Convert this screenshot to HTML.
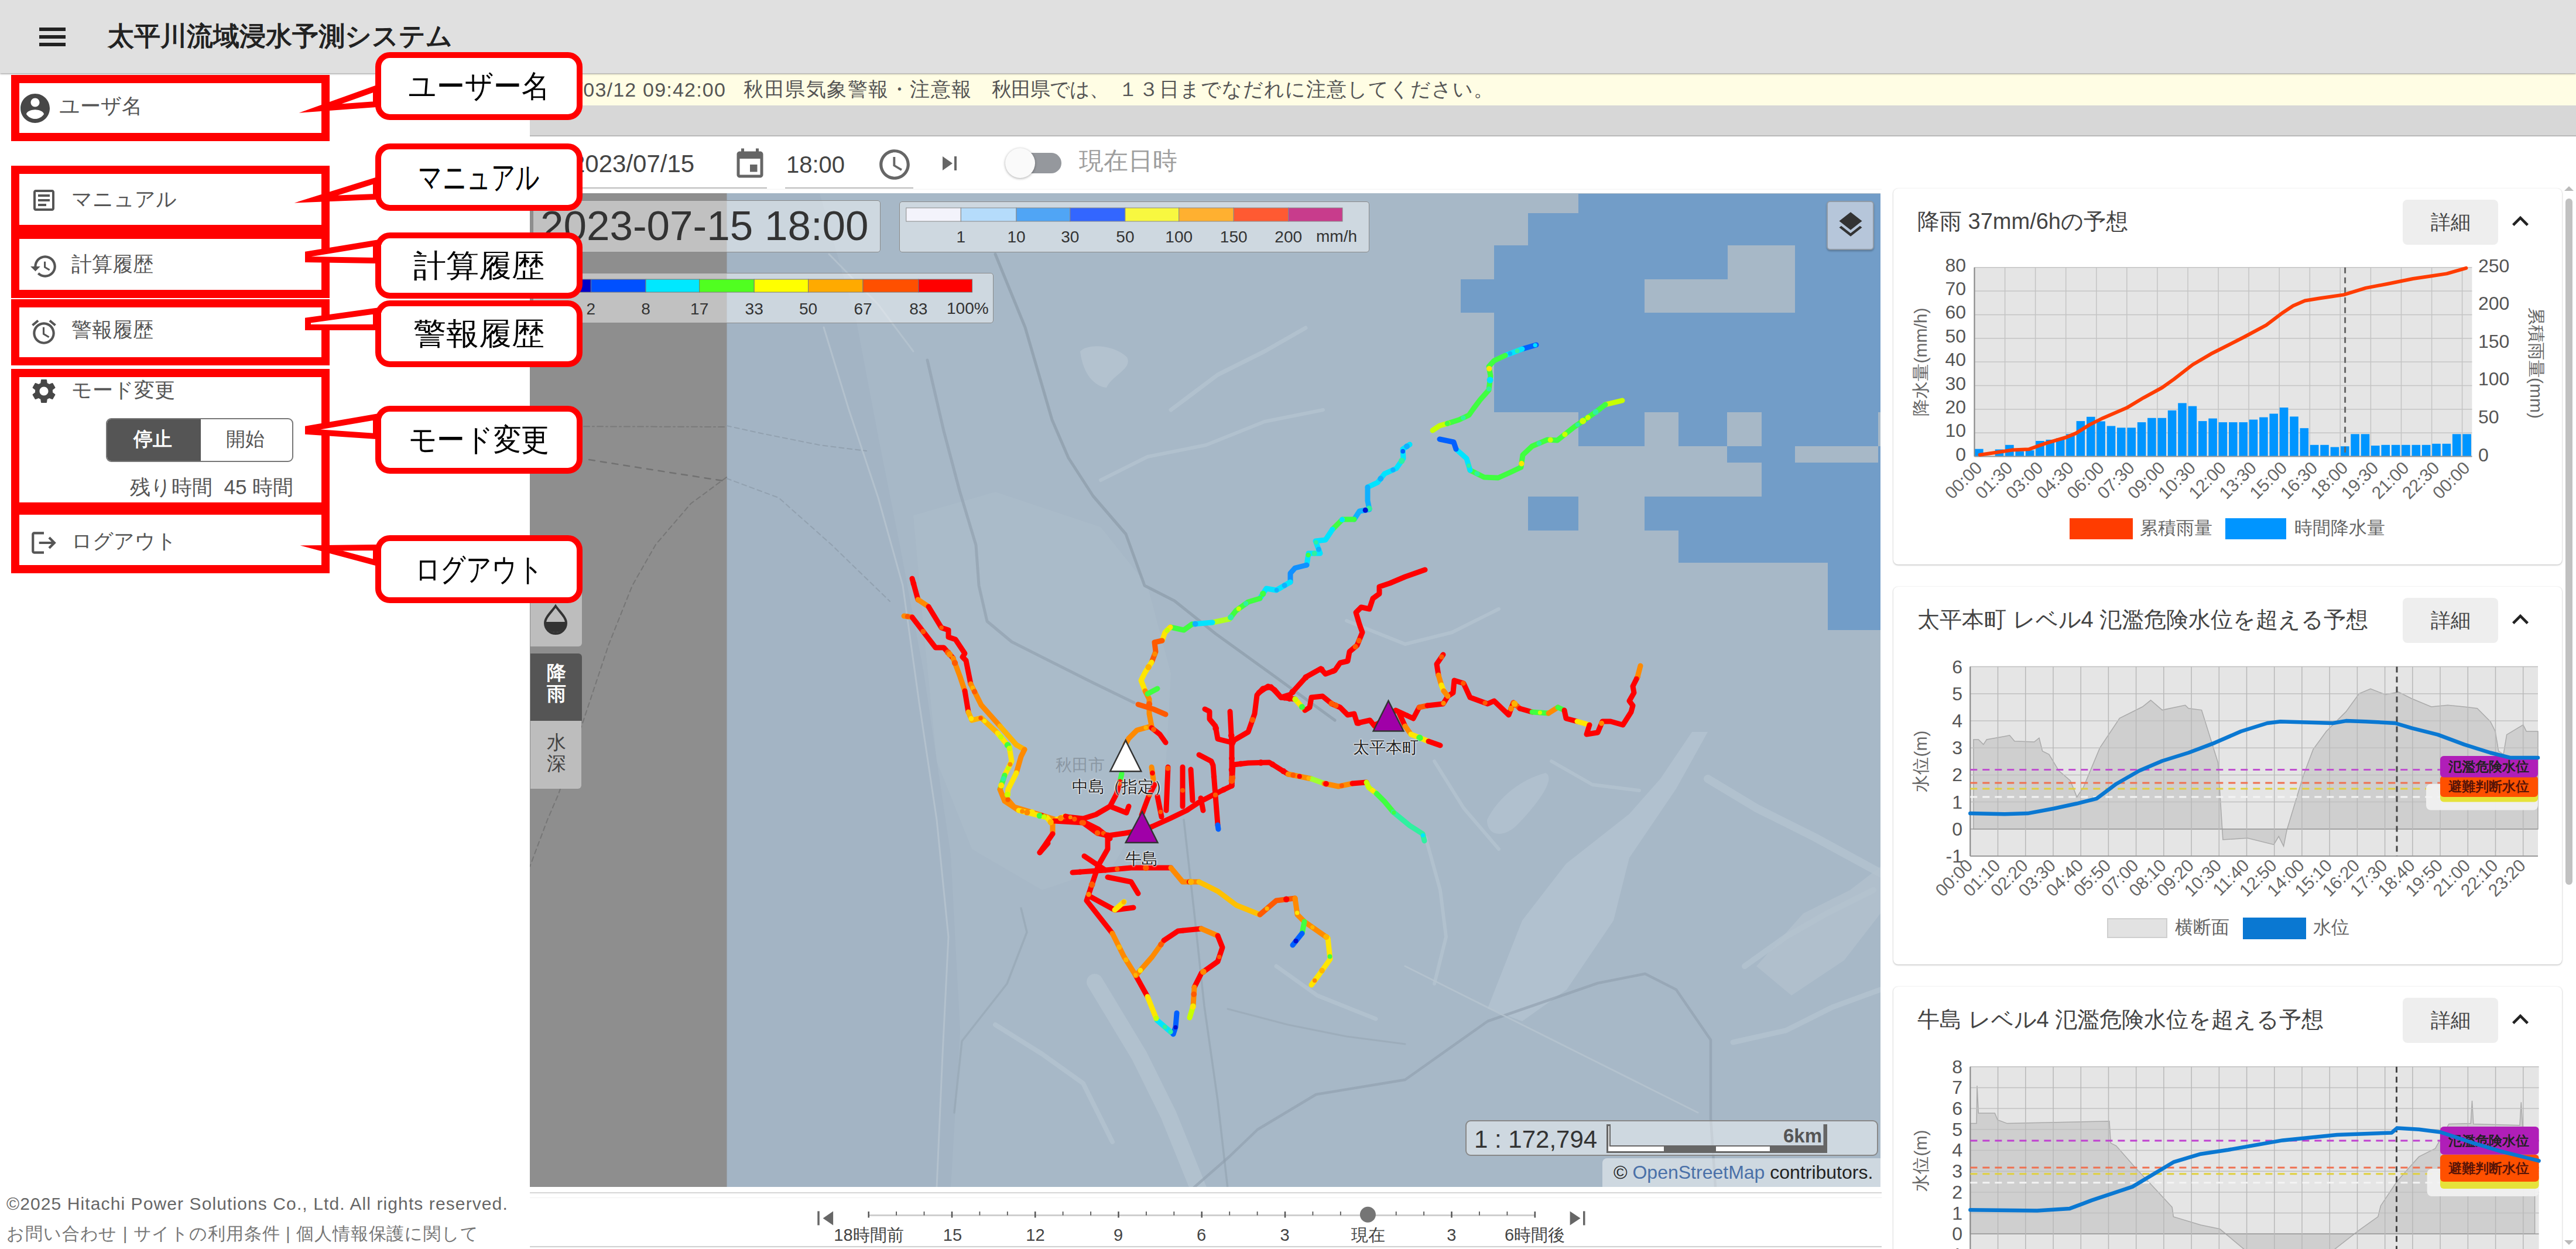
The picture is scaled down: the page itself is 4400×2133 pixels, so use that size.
<!DOCTYPE html>
<html><head><meta charset="utf-8">
<style>
html,body{margin:0;padding:0;}
body{width:4400px;height:2133px;position:relative;overflow:hidden;background:#fff;font-family:"Liberation Sans",sans-serif;color:#555;}
.a{position:absolute;}
svg.a{overflow:visible;}
</style></head><body>
<div class="a" style="left:0;top:0;width:4400px;height:125px;background:#e0e0e0;box-shadow:0 1px 3px rgba(0,0,0,.45);z-index:5"></div>
<div class="a" style="left:67px;top:47px;width:45px;height:6px;background:#222;z-index:6"></div>
<div class="a" style="left:67px;top:60px;width:45px;height:6px;background:#222;z-index:6"></div>
<div class="a" style="left:67px;top:73px;width:45px;height:6px;background:#222;z-index:6"></div>
<div class="a" style="left:184px;top:36px;font-size:45px;line-height:52px;color:#222;font-weight:bold;white-space:nowrap;z-index:6;">太平川流域浸水予測システム</div>
<div class="a" style="left:905px;top:126px;width:3495px;height:54px;background:#fffde4"></div>
<div class="a" style="left:905px;top:180px;width:3495px;height:51px;background:#d7d7d7;border-bottom:2px solid #b9b9b9"></div>
<div class="a" style="left:700px;top:133px;width:540px;text-align:right;font-size:34px;line-height:40px;letter-spacing:1.2px;color:#555;white-space:nowrap;z-index:1">2025/03/12 09:42:00</div>
<div class="a" style="left:1270px;top:133px;font-size:34px;line-height:39px;color:#555;font-weight:normal;white-space:nowrap;z-index:1;letter-spacing:1.5px">秋田県気象警報・注意報</div>
<div class="a" style="left:1694px;top:133px;font-size:34px;line-height:39px;color:#555;font-weight:normal;white-space:nowrap;z-index:1;letter-spacing:-1px">秋田県では、</div>
<div class="a" style="left:1910px;top:133px;font-size:34px;line-height:39px;color:#555;font-weight:normal;white-space:nowrap;z-index:1;letter-spacing:1px">１３日までなだれに注意してください。</div>
<div class="a" style="left:905px;top:233px;width:3495px;height:97px;background:#fff"></div>
<div class="a" style="left:976px;top:256px;font-size:42px;line-height:48px;color:#444;font-weight:normal;white-space:nowrap;z-index:1;">2023/07/15</div>
<div class="a" style="left:905px;top:320px;width:405px;height:2px;background:#bbb"></div>
<svg class="a" style="left:1251px;top:251px;z-index:1" width="60" height="60" viewBox="0 0 24 24"><path fill="#666" d="M17 12h-5v5h5v-5zM16 1v2H8V1H6v2H5c-1.11 0-1.99.9-1.99 2L3 19c0 1.1.89 2 2 2h14c1.1 0 2-.9 2-2V5c0-1.1-.9-2-2-2h-1V1h-2zm3 18H5V8h14v11z"/></svg>
<div class="a" style="left:1343px;top:258px;font-size:40px;line-height:46px;color:#444;font-weight:normal;white-space:nowrap;z-index:1;">18:00</div>
<div class="a" style="left:1341px;top:320px;width:219px;height:2px;background:#bbb"></div>
<svg class="a" style="left:1497px;top:250px;z-index:1" width="62" height="62" viewBox="0 0 24 24"><path fill="#666" d="M11.99 2C6.47 2 2 6.48 2 12s4.47 10 9.99 10C17.52 22 22 17.52 22 12S17.52 2 11.99 2zM12 20c-4.42 0-8-3.58-8-8s3.58-8 8-8 8 3.58 8 8-3.58 8-8 8zm.5-13H11v6l5.25 3.15.75-1.23-4.5-2.67z"/></svg>
<svg class="a" style="left:1598px;top:255px;z-index:1" width="48" height="48" viewBox="0 0 24 24"><path fill="#666" d="M6 18l8.5-6L6 6v12zM16 6v12h2V6h-2z"/></svg>
<div class="a" style="left:1725px;top:261px;width:88px;height:35px;border-radius:18px;background:#95989d"></div>
<div class="a" style="left:1717px;top:253px;width:51px;height:51px;border-radius:26px;background:#fafafa;box-shadow:0 1px 4px rgba(0,0,0,.35)"></div>
<div class="a" style="left:1843px;top:251px;font-size:42px;line-height:48px;color:#9e9e9e;font-weight:normal;white-space:nowrap;z-index:1;">現在日時</div>
<div class="a" style="left:0;top:125px;width:905px;height:2008px;background:#fff;z-index:1"></div>
<svg class="a" style="left:30px;top:155px;z-index:3" width="60" height="60" viewBox="0 0 24 24"><path fill="#474747" d="M12 2C6.48 2 2 6.48 2 12s4.48 10 10 10 10-4.48 10-10S17.52 2 12 2zm0 3c1.66 0 3 1.34 3 3s-1.34 3-3 3-3-1.34-3-3 1.34-3 3-3zm0 14.2c-2.5 0-4.71-1.28-6-3.22.03-1.99 4-3.08 6-3.08 1.99 0 5.97 1.09 6 3.08-1.29 1.94-3.5 3.22-6 3.22z"/></svg>
<div class="a" style="left:101px;top:161px;font-size:35px;line-height:40px;color:#555;font-weight:normal;white-space:nowrap;z-index:3;">ユーザ名</div>
<svg class="a" style="left:51px;top:318px;z-index:3" width="48" height="48" viewBox="0 0 24 24"><path fill="#555" d="M19 5v14H5V5h14m0-2H5c-1.1 0-2 .9-2 2v14c0 1.1.9 2 2 2h14c1.1 0 2-.9 2-2V5c0-1.1-.9-2-2-2zM14 17H7v-2h7v2zm3-4H7v-2h10v2zm0-4H7V7h10v2z"/></svg>
<div class="a" style="left:122px;top:320px;font-size:35px;line-height:40px;color:#555;font-weight:normal;white-space:nowrap;z-index:3;">マニュアル</div>
<svg class="a" style="left:50px;top:430px;z-index:3" width="50" height="50" viewBox="0 0 24 24"><path fill="#555" d="M13 3c-4.97 0-9 4.03-9 9H1l3.89 3.89.07.14L9 12H6c0-3.87 3.13-7 7-7s7 3.13 7 7-3.13 7-7 7c-1.93 0-3.68-.79-4.94-2.06l-1.42 1.42C8.27 19.99 10.51 21 13 21c4.97 0 9-4.03 9-9s-4.03-9-9-9zm-1 5v5l4.28 2.54.72-1.21-3.5-2.08V8H12z"/></svg>
<div class="a" style="left:122px;top:431px;font-size:35px;line-height:40px;color:#555;font-weight:normal;white-space:nowrap;z-index:3;">計算履歴</div>
<svg class="a" style="left:50px;top:542px;z-index:3" width="50" height="50" viewBox="0 0 24 24"><path fill="#555" d="M22 5.72l-4.6-3.86-1.29 1.53 4.6 3.86L22 5.72zM7.88 3.39L6.6 1.86 2 5.71l1.29 1.53 4.59-3.85zM12.5 8H11v6l4.75 2.85.75-1.23-4-2.37V8zM12 4c-4.97 0-9 4.03-9 9s4.02 9 9 9c4.97 0 9-4.03 9-9s-4.03-9-9-9zm0 16c-3.87 0-7-3.13-7-7s3.13-7 7-7 7 3.13 7 7-3.13 7-7 7z"/></svg>
<div class="a" style="left:122px;top:543px;font-size:35px;line-height:40px;color:#555;font-weight:normal;white-space:nowrap;z-index:3;">警報履歴</div>
<svg class="a" style="left:50px;top:643px;z-index:3" width="50" height="50" viewBox="0 0 24 24"><path fill="#474747" d="M19.14 12.94c.04-.3.06-.61.06-.94 0-.32-.02-.64-.07-.94l2.03-1.58c.18-.14.23-.41.12-.61l-1.92-3.32c-.12-.22-.37-.29-.59-.22l-2.39.96c-.5-.38-1.03-.7-1.62-.94l-.36-2.54c-.04-.24-.24-.41-.48-.41h-3.84c-.24 0-.43.17-.47.41l-.36 2.54c-.59.24-1.13.57-1.62.94l-2.39-.96c-.22-.08-.47 0-.59.22L2.74 8.87c-.12.21-.08.47.12.61l2.03 1.58c-.05.3-.09.63-.09.94s.02.64.07.94l-2.03 1.58c-.18.14-.23.41-.12.61l1.92 3.32c.12.22.37.29.59.22l2.39-.96c.5.38 1.03.7 1.62.94l.36 2.54c.05.24.24.41.48.41h3.84c.24 0 .44-.17.47-.41l.36-2.54c.59-.24 1.13-.56 1.62-.94l2.39.96c.22.08.47 0 .59-.22l1.92-3.32c.12-.22.07-.47-.12-.61l-2.01-1.58zM12 15.6c-1.98 0-3.6-1.62-3.6-3.6s1.62-3.6 3.6-3.6 3.6 1.62 3.6 3.6-1.62 3.6-3.6 3.6z"/></svg>
<div class="a" style="left:122px;top:646px;font-size:35px;line-height:40px;color:#555;font-weight:normal;white-space:nowrap;z-index:3;">モード変更</div>
<div class="a" style="left:181px;top:714px;width:320px;height:75px;border:2px solid #777;border-radius:9px;box-sizing:border-box;background:#fff;z-index:3;overflow:hidden"><div class="a" style="left:0;top:0;width:160px;height:75px;background:#555"></div></div>
<div class="a" style="left:228px;top:731px;font-size:33px;line-height:38px;color:#fff;font-weight:bold;white-space:nowrap;z-index:4;">停止</div>
<div class="a" style="left:386px;top:731px;font-size:33px;line-height:38px;color:#555;font-weight:normal;white-space:nowrap;z-index:4;">開始</div>
<div class="a" style="left:222px;top:812px;font-size:35px;line-height:40px;color:#555;font-weight:normal;white-space:nowrap;z-index:3;">残り時間 &nbsp;45 時間</div>
<svg class="a" style="left:50px;top:902px;z-index:3" width="50" height="50" viewBox="0 0 24 24"><path fill="#555" d="M17 7l-1.41 1.41L18.17 11H8v2h10.17l-2.58 2.58L17 17l5-5zM4 5h8V3H4c-1.1 0-2 .9-2 2v14c0 1.1.9 2 2 2h8v-2H4V5z"/></svg>
<div class="a" style="left:122px;top:904px;font-size:35px;line-height:40px;color:#555;font-weight:normal;white-space:nowrap;z-index:3;">ログアウト</div>
<div class="a" style="left:19px;top:128px;width:544px;height:113px;border:14px solid #f00;box-sizing:border-box;z-index:4"></div>
<div class="a" style="left:19px;top:283px;width:544px;height:115px;border:14px solid #f00;box-sizing:border-box;z-index:4"></div>
<div class="a" style="left:19px;top:394px;width:544px;height:115px;border:14px solid #f00;box-sizing:border-box;z-index:4"></div>
<div class="a" style="left:19px;top:511px;width:544px;height:113px;border:14px solid #f00;box-sizing:border-box;z-index:4"></div>
<div class="a" style="left:19px;top:630px;width:544px;height:242px;border:14px solid #f00;box-sizing:border-box;z-index:4"></div>
<div class="a" style="left:19px;top:865px;width:544px;height:114px;border:14px solid #f00;box-sizing:border-box;z-index:4"></div>
<svg class="a" style="left:0;top:0;z-index:8" width="1100" height="1100" viewBox="0 0 1100 1100"><rect x="646" y="94" width="344" height="106" rx="20" ry="20" fill="#fff" stroke="#f00" stroke-width="10"/><polygon points="642,151 547,185 642,178" fill="#fff" stroke="#f00" stroke-width="10" stroke-linejoin="miter" stroke-miterlimit="12"/><rect x="651" y="154" width="30" height="28" fill="#fff"/><rect x="646" y="250" width="344" height="105" rx="20" ry="20" fill="#fff" stroke="#f00" stroke-width="10"/><polygon points="642,308 540,340 642,336" fill="#fff" stroke="#f00" stroke-width="10" stroke-linejoin="miter" stroke-miterlimit="12"/><rect x="651" y="311" width="30" height="26" fill="#fff"/><rect x="646" y="402" width="344" height="103" rx="20" ry="20" fill="#fff" stroke="#f00" stroke-width="10"/><polygon points="642,415 526,434 526,443 642,445" fill="#fff" stroke="#f00" stroke-width="10" stroke-linejoin="miter" stroke-miterlimit="12"/><rect x="651" y="418" width="30" height="24" fill="#fff"/><rect x="646" y="518" width="344" height="104" rx="20" ry="20" fill="#fff" stroke="#f00" stroke-width="10"/><polygon points="642,531 526,547 526,559 642,559" fill="#fff" stroke="#f00" stroke-width="10" stroke-linejoin="miter" stroke-miterlimit="12"/><rect x="651" y="534" width="30" height="22" fill="#fff"/><rect x="646" y="698" width="344" height="106" rx="20" ry="20" fill="#fff" stroke="#f00" stroke-width="10"/><polygon points="642,712 526,732 526,737 642,745" fill="#fff" stroke="#f00" stroke-width="10" stroke-linejoin="miter" stroke-miterlimit="12"/><rect x="651" y="715" width="30" height="27" fill="#fff"/><rect x="646" y="919" width="344" height="106" rx="20" ry="20" fill="#fff" stroke="#f00" stroke-width="10"/><polygon points="642,935 549,936 642,961" fill="#fff" stroke="#f00" stroke-width="10" stroke-linejoin="miter" stroke-miterlimit="12"/><rect x="651" y="938" width="30" height="20" fill="#fff"/></svg>
<div class="a" style="left:646px;top:89px;width:344px;height:116px;line-height:116px;text-align:center;font-size:52px;transform:scaleX(0.92);color:#000;z-index:9;white-space:nowrap">ユーザー名</div>
<div class="a" style="left:646px;top:245px;width:344px;height:115px;line-height:115px;text-align:center;font-size:56px;transform:scaleX(0.727);color:#000;z-index:9;white-space:nowrap">マニュアル</div>
<div class="a" style="left:646px;top:397px;width:344px;height:113px;line-height:113px;text-align:center;font-size:53px;transform:scaleX(1.06);color:#000;z-index:9;white-space:nowrap">計算履歴</div>
<div class="a" style="left:646px;top:513px;width:344px;height:114px;line-height:114px;text-align:center;font-size:53px;transform:scaleX(1.06);color:#000;z-index:9;white-space:nowrap">警報履歴</div>
<div class="a" style="left:646px;top:693px;width:344px;height:116px;line-height:116px;text-align:center;font-size:53px;transform:scaleX(0.9);color:#000;z-index:9;white-space:nowrap">モード変更</div>
<div class="a" style="left:646px;top:914px;width:344px;height:116px;line-height:116px;text-align:center;font-size:54px;transform:scaleX(0.796);color:#000;z-index:9;white-space:nowrap">ログアウト</div>
<div class="a" style="left:11px;top:2039px;font-size:30px;line-height:34px;color:#666;font-weight:normal;white-space:nowrap;z-index:3;letter-spacing:1.1px">©2025 Hitachi Power Solutions Co., Ltd. All rights reserved.</div>
<div class="a" style="left:11px;top:2090px;font-size:30px;line-height:34px;color:#777;font-weight:normal;white-space:nowrap;z-index:3;letter-spacing:0.9px">お問い合わせ | サイトの利用条件 | 個人情報保護に関して</div>
<div class="a" style="left:897px;top:324px;width:2327px;height:1712px;background:#fff;border-radius:8px;box-shadow:0 1px 3px rgba(0,0,0,.3);"></div>
<div class="a" style="left:897px;top:2046px;width:2327px;height:82px;background:#fff;border-radius:8px;box-shadow:0 1px 3px rgba(0,0,0,.35);"></div>
<div class="a" style="left:905px;top:330px;width:2307px;height:1697px;background:#a3b4c4;overflow:hidden"></div>
<svg class="a" style="left:905px;top:330px;overflow:hidden" width="2307" height="1697" viewBox="905 330 2307 1697"><rect x="905" y="330" width="336.5" height="1697" fill="#8e8e8e"/><polygon points="1400,330 1463,550 1500,745 1537,931 1578,1150 1624,1460 1640,1760 1624,2027 3213,2027 3213,330" fill="#a7b8c7"/><path d="M1845,600 C1860,585 1905,590 1925,610 C1935,630 1900,640 1890,662 C1870,660 1850,640 1845,600Z" fill="#b3c2cf"/><path d="M2540,1400 C2560,1360 2600,1330 2640,1320 C2660,1330 2620,1380 2590,1410 C2570,1430 2540,1430 2540,1400Z" fill="#b3c2cf" opacity=".8"/><polygon points="1560,880 1700,840 1880,900 1960,1000 2000,1150 1990,1330 1900,1480 1780,1520 1660,1450 1600,1300 1580,1100" fill="#adbdcb" opacity=".55"/><polyline points="1870,1677 1946,1803 1996,1904 2047,2030" fill="none" stroke="#b3c2cf" stroke-width="28" opacity="0.85" stroke-linecap="round" stroke-linejoin="round"/><polyline points="2917,1330 3000,1380 3100,1430 3212,1491" fill="none" stroke="#b3c2cf" stroke-width="14" opacity="0.85" stroke-linecap="round" stroke-linejoin="round"/><polyline points="2650,1300 2720,1340 2800,1350" fill="none" stroke="#b3c2cf" stroke-width="6" opacity="0.85" stroke-linecap="round" stroke-linejoin="round"/><polyline points="2000,700 2080,640 2160,600 2230,560" fill="none" stroke="#b3c2cf" stroke-width="7" opacity="0.85" stroke-linecap="round" stroke-linejoin="round"/><polyline points="1880,820 1960,780 2060,760 2160,720 2260,700" fill="none" stroke="#b3c2cf" stroke-width="6" opacity="0.85" stroke-linecap="round" stroke-linejoin="round"/><polyline points="2300,1060 2400,1100 2480,1080 2560,1040" fill="none" stroke="#b3c2cf" stroke-width="6" opacity="0.85" stroke-linecap="round" stroke-linejoin="round"/><polyline points="2450,1300 2500,1380 2560,1450" fill="none" stroke="#b3c2cf" stroke-width="6" opacity="0.85" stroke-linecap="round" stroke-linejoin="round"/><polyline points="2435,1430 2460,1520 2470,1600 2450,1680" fill="none" stroke="#b3c2cf" stroke-width="6" opacity="0.85" stroke-linecap="round" stroke-linejoin="round"/><polyline points="2980,1650 3050,1600 3120,1560 3200,1520" fill="none" stroke="#b3c2cf" stroke-width="10" opacity="0.85" stroke-linecap="round" stroke-linejoin="round"/><polyline points="2960,1780 3050,1760 3130,1720 3212,1690" fill="none" stroke="#b3c2cf" stroke-width="9" opacity="0.85" stroke-linecap="round" stroke-linejoin="round"/><polyline points="1700,1750 1780,1800 1850,1850 1900,1950" fill="none" stroke="#b3c2cf" stroke-width="8" opacity="0.85" stroke-linecap="round" stroke-linejoin="round"/><polyline points="2180,1650 2250,1700 2350,1740" fill="none" stroke="#b3c2cf" stroke-width="7" opacity="0.85" stroke-linecap="round" stroke-linejoin="round"/><polygon points="2541,1722 2600,1572 2675,1475 2783,1390 2836,1330 2890,1250 2917,1250 2863,1347 2783,1465 2756,1572 2676,1690 2600,1744" fill="#b3c2cf" opacity=".9"/><polygon points="3000,1650 3080,1560 3160,1520 3212,1480 3212,1560 3150,1640 3060,1700" fill="#b3c2cf" opacity=".7"/><polyline points="1700,434 1751,559 1797,717 1825,782 1867,847 1923,912 1955,1000 2006,1026 2076,1082 2173,1152 2280,1230" fill="none" stroke="#8e9dab" stroke-width="5" opacity="0.75" stroke-linecap="round" stroke-linejoin="round"/><polyline points="1584,615 1612,736 1639,838 1667,931 1672,1000 1686,1061 1728,1096 1867,1166 1937,1200" fill="none" stroke="#8e9dab" stroke-width="5" opacity="0.6" stroke-linecap="round" stroke-linejoin="round"/><polyline points="2037,2030 2100,1975 2148,1929 2248,1869 2400,1844 2541,1744 2729,1679 2810,1663 2863,1690 2922,1776 2922,1910 2930,2027" fill="none" stroke="#8e9dab" stroke-width="4.5" opacity="0.6" stroke-linecap="round" stroke-linejoin="round"/><polyline points="2022,1400 2040,1560 2057,1718 2080,1880 2097,2030" fill="none" stroke="#8e9dab" stroke-width="3.5" opacity="0.5" stroke-linecap="round" stroke-linejoin="round"/><polyline points="1744,1551 1754,1592 1720,1680 1643,1778 1630,1900" fill="none" stroke="#8e9dab" stroke-width="3.5" opacity="0.45" stroke-linecap="round" stroke-linejoin="round"/><polyline points="2097,1723 2200,1750 2300,1770 2400,1783" fill="none" stroke="#8e9dab" stroke-width="3" opacity="0.4" stroke-linecap="round" stroke-linejoin="round"/><polyline points="1407,559 1450,700 1500,850 1542,1000 1570,1200 1600,1400 1620,1600 1610,1800 1600,2027" fill="none" stroke="#b6c4d0" stroke-width="3" opacity="0.8" stroke-linecap="round" stroke-linejoin="round"/><polyline points="1416,434 1500,520 1560,600" fill="none" stroke="#b6c4d0" stroke-width="3" opacity="0.8" stroke-linecap="round" stroke-linejoin="round"/><polyline points="2400,1650 2500,1700 2600,1750 2700,1800 2800,1850 2900,1900" fill="none" stroke="#b6c4d0" stroke-width="3" opacity="0.8" stroke-linecap="round" stroke-linejoin="round"/><polyline points="1241,727 1300,740 1400,760 1480,770" fill="none" stroke="#8a98a6" stroke-width="2" opacity="0.7" stroke-linecap="round" stroke-linejoin="round" stroke-dasharray="8,6"/><polyline points="1241,817 1330,850 1420,930 1520,1027" fill="none" stroke="#8a98a6" stroke-width="2" opacity="0.7" stroke-linecap="round" stroke-linejoin="round" stroke-dasharray="8,6"/><polyline points="1241,815 1180,860 1120,930 1080,1000 1040,1100 995,1235 954,1356 935,1400 905,1480" fill="none" stroke="#707070" stroke-width="2" opacity="0.8" stroke-linecap="round" stroke-linejoin="round" stroke-dasharray="8,6"/><polyline points="1006,785 1100,800 1241,822" fill="none" stroke="#6a6a6a" stroke-width="2.5" opacity="0.8" stroke-linecap="round" stroke-linejoin="round" stroke-dasharray="10,10"/><polyline points="905,728 1241,729" fill="none" stroke="#6a6a6a" stroke-width="2" opacity="0.55" stroke-linecap="round" stroke-linejoin="round" stroke-dasharray="10,5,3,5"/><rect x="2696" y="331" width="517" height="33" fill="#729dc8" shape-rendering="crispEdges"/><rect x="2610" y="364" width="603" height="55" fill="#729dc8" shape-rendering="crispEdges"/><rect x="2552" y="419" width="399" height="58" fill="#729dc8" shape-rendering="crispEdges"/><rect x="3066" y="419" width="147" height="58" fill="#729dc8" shape-rendering="crispEdges"/><rect x="2495" y="477" width="314" height="57" fill="#729dc8" shape-rendering="crispEdges"/><rect x="3066" y="477" width="147" height="57" fill="#729dc8" shape-rendering="crispEdges"/><rect x="2552" y="534" width="661" height="170" fill="#729dc8" shape-rendering="crispEdges"/><rect x="2696" y="704" width="113" height="58" fill="#729dc8" shape-rendering="crispEdges"/><rect x="2867" y="704" width="83" height="58" fill="#729dc8" shape-rendering="crispEdges"/><rect x="3009" y="704" width="199" height="58" fill="#729dc8" shape-rendering="crispEdges"/><rect x="2950" y="762" width="116" height="28" fill="#729dc8" shape-rendering="crispEdges"/><rect x="3208" y="762" width="5" height="28" fill="#729dc8" shape-rendering="crispEdges"/><rect x="3009" y="790" width="204" height="58" fill="#729dc8" shape-rendering="crispEdges"/><rect x="2610" y="848" width="86" height="58" fill="#729dc8" shape-rendering="crispEdges"/><rect x="2809" y="848" width="404" height="58" fill="#729dc8" shape-rendering="crispEdges"/><rect x="2867" y="906" width="346" height="55" fill="#729dc8" shape-rendering="crispEdges"/><rect x="3122" y="961" width="91" height="115" fill="#729dc8" shape-rendering="crispEdges"/><polyline points="2624,589 2600,596" fill="none" stroke="#0060ff" stroke-width="9" stroke-linecap="round" stroke-linejoin="round"/><polyline points="2600,596 2571,607" fill="none" stroke="#00e4ff" stroke-width="9" stroke-linecap="round" stroke-linejoin="round"/><polyline points="2571,607 2552,616 2543,626 2546,642 2543,666 2528,683 2516,699 2509,709 2492,717 2473,723" fill="none" stroke="#40ff40" stroke-width="9" stroke-linecap="round" stroke-linejoin="round"/><polyline points="2473,723 2459,727 2447,735" fill="none" stroke="#c8ff00" stroke-width="9" stroke-linecap="round" stroke-linejoin="round"/><polyline points="2771,684 2742,691" fill="none" stroke="#c8ff00" stroke-width="9" stroke-linecap="round" stroke-linejoin="round"/><polyline points="2742,691 2728,702 2708,716 2689,729 2660,752 2643,751 2617,762 2601,777 2598,798 2579,807 2559,816 2535,815 2511,803" fill="none" stroke="#40ff40" stroke-width="9" stroke-linecap="round" stroke-linejoin="round"/><polyline points="2511,803 2505,783 2487,767" fill="none" stroke="#00e4ff" stroke-width="9" stroke-linecap="round" stroke-linejoin="round"/><polyline points="2487,767 2483,755 2459,750" fill="none" stroke="#0060ff" stroke-width="9" stroke-linecap="round" stroke-linejoin="round"/><polyline points="2408,759 2396,767 2397,783 2385,800 2365,809 2353,824 2336,832" fill="none" stroke="#00e4ff" stroke-width="9" stroke-linecap="round" stroke-linejoin="round"/><polyline points="2336,832 2336,855 2339,870 2322,873 2313,887" fill="none" stroke="#10b0ff" stroke-width="9" stroke-linecap="round" stroke-linejoin="round"/><polyline points="2313,887 2293,887 2276,904" fill="none" stroke="#40ff40" stroke-width="9" stroke-linecap="round" stroke-linejoin="round"/><polyline points="2276,904 2264,922 2247,924 2255,945 2235,945 2232,965" fill="none" stroke="#00e4ff" stroke-width="9" stroke-linecap="round" stroke-linejoin="round"/><polyline points="2232,965 2212,970 2204,979 2204,994" fill="none" stroke="#1090ff" stroke-width="9" stroke-linecap="round" stroke-linejoin="round"/><polyline points="2204,994 2180,1008 2163,1005 2152,1022" fill="none" stroke="#00e4ff" stroke-width="9" stroke-linecap="round" stroke-linejoin="round"/><polyline points="2152,1022 2132,1028 2111,1043 2100,1057" fill="none" stroke="#40ff40" stroke-width="9" stroke-linecap="round" stroke-linejoin="round"/><polyline points="2100,1057 2071,1063" fill="none" stroke="#b0ff20" stroke-width="9" stroke-linecap="round" stroke-linejoin="round"/><polyline points="2071,1063 2036,1066" fill="none" stroke="#00e4ff" stroke-width="9" stroke-linecap="round" stroke-linejoin="round"/><polyline points="2036,1066 2022,1076 1999,1071" fill="none" stroke="#40ff40" stroke-width="9" stroke-linecap="round" stroke-linejoin="round"/><polyline points="1999,1071 1990,1080 1985,1094" fill="none" stroke="#ffe600" stroke-width="9" stroke-linecap="round" stroke-linejoin="round"/><polyline points="1985,1094 1972,1097 1974,1113 1967,1131" fill="none" stroke="#ff5a00" stroke-width="9" stroke-linecap="round" stroke-linejoin="round"/><polyline points="1967,1131 1956,1148 1949,1162 1956,1180" fill="none" stroke="#ffe600" stroke-width="9" stroke-linecap="round" stroke-linejoin="round"/><polyline points="1956,1180 1963,1194 1963,1219 1967,1240" fill="none" stroke="#ff8a00" stroke-width="9" stroke-linecap="round" stroke-linejoin="round"/><polyline points="1967,1240 1942,1247 1928,1261 1922,1272" fill="none" stroke="#ff8a00" stroke-width="9" stroke-linecap="round" stroke-linejoin="round"/><polyline points="1916,1321 1913,1335" fill="none" stroke="#40ff40" stroke-width="9" stroke-linecap="round" stroke-linejoin="round"/><polyline points="1913,1335 1907,1356 1896,1377 1872,1391 1850,1398 1822,1395 1801,1402" fill="none" stroke="#ff0000" stroke-width="9" stroke-linecap="round" stroke-linejoin="round"/><polyline points="1960,1185 1977,1176" fill="none" stroke="#40ff40" stroke-width="9" stroke-linecap="round" stroke-linejoin="round"/><polyline points="1944,1203 1970,1211 1991,1220" fill="none" stroke="#ff5a00" stroke-width="9" stroke-linecap="round" stroke-linejoin="round"/><polyline points="1967,1243 1981,1254 1991,1268" fill="none" stroke="#ff0000" stroke-width="9" stroke-linecap="round" stroke-linejoin="round"/><polyline points="1896,1377 1924,1388 1928,1377" fill="none" stroke="#ff0000" stroke-width="9" stroke-linecap="round" stroke-linejoin="round"/><polyline points="1558,988 1568,1024" fill="none" stroke="#ff0000" stroke-width="9" stroke-linecap="round" stroke-linejoin="round"/><polyline points="1568,1024 1586,1036" fill="none" stroke="#ff8a00" stroke-width="9" stroke-linecap="round" stroke-linejoin="round"/><polyline points="1586,1036 1608,1072 1620,1076 1620,1088 1632,1092 1648,1116 1644,1122 1650,1128 1658,1168" fill="none" stroke="#ff0000" stroke-width="9" stroke-linecap="round" stroke-linejoin="round"/><polyline points="1658,1168 1676,1204 1708,1240" fill="none" stroke="#ff8a00" stroke-width="9" stroke-linecap="round" stroke-linejoin="round"/><polyline points="1708,1240 1736,1272 1750,1280" fill="none" stroke="#ffb400" stroke-width="9" stroke-linecap="round" stroke-linejoin="round"/><polyline points="1750,1280 1744,1292 1736,1320" fill="none" stroke="#ff8a00" stroke-width="9" stroke-linecap="round" stroke-linejoin="round"/><polyline points="1736,1320 1722,1348 1720,1364" fill="none" stroke="#ffe600" stroke-width="9" stroke-linecap="round" stroke-linejoin="round"/><polyline points="1720,1364 1732,1378 1772,1390 1804,1400" fill="none" stroke="#ff8a00" stroke-width="9" stroke-linecap="round" stroke-linejoin="round"/><polyline points="1804,1400 1820,1394" fill="none" stroke="#ffe600" stroke-width="9" stroke-linecap="round" stroke-linejoin="round"/><polyline points="1544,1052 1558,1054" fill="none" stroke="#ff8a00" stroke-width="9" stroke-linecap="round" stroke-linejoin="round"/><polyline points="1558,1054 1598,1106 1612,1106 1628,1124" fill="none" stroke="#ff0000" stroke-width="9" stroke-linecap="round" stroke-linejoin="round"/><polyline points="1628,1124 1640,1156 1648,1180" fill="none" stroke="#ff8a00" stroke-width="9" stroke-linecap="round" stroke-linejoin="round"/><polyline points="1648,1180 1654,1216" fill="none" stroke="#ff0000" stroke-width="9" stroke-linecap="round" stroke-linejoin="round"/><polyline points="1654,1216 1660,1230 1676,1226 1704,1252" fill="none" stroke="#ffb400" stroke-width="9" stroke-linecap="round" stroke-linejoin="round"/><polyline points="1704,1252 1724,1276" fill="none" stroke="#ffe600" stroke-width="9" stroke-linecap="round" stroke-linejoin="round"/><polyline points="1724,1276 1728,1300 1716,1324" fill="none" stroke="#ffe600" stroke-width="9" stroke-linecap="round" stroke-linejoin="round"/><polyline points="1716,1324 1708,1348" fill="none" stroke="#40ff40" stroke-width="9" stroke-linecap="round" stroke-linejoin="round"/><polyline points="1708,1348 1716,1368 1740,1384" fill="none" stroke="#ff8a00" stroke-width="9" stroke-linecap="round" stroke-linejoin="round"/><polyline points="1740,1384 1788,1396 1798,1408" fill="none" stroke="#ffe600" stroke-width="9" stroke-linecap="round" stroke-linejoin="round"/><polyline points="1798,1408 1798,1424" fill="none" stroke="#ff8a00" stroke-width="9" stroke-linecap="round" stroke-linejoin="round"/><polyline points="1798,1424 1776,1456" fill="none" stroke="#ff0000" stroke-width="9" stroke-linecap="round" stroke-linejoin="round"/><polyline points="1820,1394 1852,1404 1876,1416 1896,1432" fill="none" stroke="#ff0000" stroke-width="9" stroke-linecap="round" stroke-linejoin="round"/><polyline points="1801,1402 1850,1405 1875,1423 1893,1427 1921,1423 1950,1418 1967,1412" fill="none" stroke="#ff0000" stroke-width="9" stroke-linecap="round" stroke-linejoin="round"/><polyline points="1967,1412 1998,1398 2027,1384 2048,1370 2083,1352 2104,1342" fill="none" stroke="#ff0000" stroke-width="9" stroke-linecap="round" stroke-linejoin="round"/><polyline points="2104,1342 2106,1306 2132,1303 2168,1302 2200,1322" fill="none" stroke="#ff0000" stroke-width="9" stroke-linecap="round" stroke-linejoin="round"/><polyline points="2200,1322 2240,1330" fill="none" stroke="#ff8a00" stroke-width="9" stroke-linecap="round" stroke-linejoin="round"/><polyline points="2240,1330 2262,1338" fill="none" stroke="#a0ff30" stroke-width="9" stroke-linecap="round" stroke-linejoin="round"/><polyline points="2262,1338 2286,1343 2310,1338" fill="none" stroke="#ff8a00" stroke-width="9" stroke-linecap="round" stroke-linejoin="round"/><polyline points="2310,1338 2334,1336" fill="none" stroke="#ff0000" stroke-width="9" stroke-linecap="round" stroke-linejoin="round"/><polyline points="2334,1336 2338,1345 2351,1355" fill="none" stroke="#c8ff00" stroke-width="9" stroke-linecap="round" stroke-linejoin="round"/><polyline points="2351,1355 2365,1369 2380,1387" fill="none" stroke="#40ff40" stroke-width="9" stroke-linecap="round" stroke-linejoin="round"/><polyline points="2380,1387 2408,1410 2430,1424 2433,1436" fill="none" stroke="#30f0a0" stroke-width="9" stroke-linecap="round" stroke-linejoin="round"/><polyline points="2104,1342 2104,1272 2108,1264 2132,1250 2143,1219 2147,1187 2157,1176 2171,1173 2188,1191" fill="none" stroke="#ff0000" stroke-width="9" stroke-linecap="round" stroke-linejoin="round"/><polyline points="2104,1268 2080,1262 2076,1240 2066,1228 2066,1215 2058,1211" fill="none" stroke="#ff0000" stroke-width="9" stroke-linecap="round" stroke-linejoin="round"/><polyline points="2104,1272 2101,1215" fill="none" stroke="#ff0000" stroke-width="9" stroke-linecap="round" stroke-linejoin="round"/><polyline points="2048,1289 2069,1300 2072,1307 2080,1409" fill="none" stroke="#ff0000" stroke-width="9" stroke-linecap="round" stroke-linejoin="round"/><polyline points="2080,1409 2081,1416" fill="none" stroke="#0060ff" stroke-width="9" stroke-linecap="round" stroke-linejoin="round"/><polyline points="1967,1310 1970,1331" fill="none" stroke="#ff8a00" stroke-width="9" stroke-linecap="round" stroke-linejoin="round"/><polyline points="1995,1310 1992,1384" fill="none" stroke="#ff0000" stroke-width="9" stroke-linecap="round" stroke-linejoin="round"/><polyline points="2020,1310 2020,1377" fill="none" stroke="#ff0000" stroke-width="9" stroke-linecap="round" stroke-linejoin="round"/><polyline points="2034,1314 2037,1367" fill="none" stroke="#ff0000" stroke-width="9" stroke-linecap="round" stroke-linejoin="round"/><polyline points="2051,1363 2055,1384" fill="none" stroke="#ff0000" stroke-width="9" stroke-linecap="round" stroke-linejoin="round"/><polyline points="1977,1360 1984,1395" fill="none" stroke="#ff0000" stroke-width="9" stroke-linecap="round" stroke-linejoin="round"/><polyline points="1950,1392 1962,1360 1972,1340" fill="none" stroke="#ff0000" stroke-width="9" stroke-linecap="round" stroke-linejoin="round"/><polyline points="2150,1183 2166,1172 2177,1178 2188,1191 2204,1186 2231,1156 2256,1142 2264,1151 2280,1145 2289,1132 2302,1129 2305,1113 2318,1102 2327,1080 2322,1066 2316,1046 2325,1037 2339,1040 2345,1022 2356,1014 2356,1002 2374,996 2400,985 2417,979 2434,973" fill="none" stroke="#ff0000" stroke-width="9" stroke-linecap="round" stroke-linejoin="round"/><polyline points="2188,1191 2212,1194" fill="none" stroke="#ff0000" stroke-width="9" stroke-linecap="round" stroke-linejoin="round"/><polyline points="2212,1194 2229,1213" fill="none" stroke="#ffe600" stroke-width="9" stroke-linecap="round" stroke-linejoin="round"/><polyline points="2229,1213 2237,1208 2240,1191 2259,1189 2275,1202 2289,1208 2302,1221 2313,1219 2318,1235 2340,1230 2348,1240 2384,1213 2414,1227 2424,1208" fill="none" stroke="#ff0000" stroke-width="9" stroke-linecap="round" stroke-linejoin="round"/><polyline points="2424,1208 2438,1205" fill="none" stroke="#ff5a00" stroke-width="9" stroke-linecap="round" stroke-linejoin="round"/><polyline points="2438,1205 2465,1202 2473,1189 2482,1183 2484,1162 2500,1167 2511,1191 2541,1202 2552,1197 2577,1221 2585,1200" fill="none" stroke="#ff0000" stroke-width="9" stroke-linecap="round" stroke-linejoin="round"/><polyline points="2585,1200 2596,1210" fill="none" stroke="#ff5a00" stroke-width="9" stroke-linecap="round" stroke-linejoin="round"/><polyline points="2596,1210 2617,1216" fill="none" stroke="#ff0000" stroke-width="9" stroke-linecap="round" stroke-linejoin="round"/><polyline points="2617,1216 2645,1218" fill="none" stroke="#40ff40" stroke-width="9" stroke-linecap="round" stroke-linejoin="round"/><polyline points="2645,1218 2661,1208" fill="none" stroke="#ff8a00" stroke-width="9" stroke-linecap="round" stroke-linejoin="round"/><polyline points="2661,1208 2672,1213" fill="none" stroke="#40ff40" stroke-width="9" stroke-linecap="round" stroke-linejoin="round"/><polyline points="2672,1213 2675,1227 2694,1232" fill="none" stroke="#ff0000" stroke-width="9" stroke-linecap="round" stroke-linejoin="round"/><polyline points="2694,1232 2715,1238" fill="none" stroke="#ffe600" stroke-width="9" stroke-linecap="round" stroke-linejoin="round"/><polyline points="2715,1238 2710,1254 2729,1251 2737,1232 2751,1232 2772,1238 2786,1216 2789,1205 2783,1197 2791,1183 2789,1172 2797,1156" fill="none" stroke="#ff0000" stroke-width="9" stroke-linecap="round" stroke-linejoin="round"/><polyline points="2797,1156 2802,1137" fill="none" stroke="#ff8a00" stroke-width="9" stroke-linecap="round" stroke-linejoin="round"/><polyline points="2465,1118 2454,1134 2457,1153" fill="none" stroke="#ff0000" stroke-width="9" stroke-linecap="round" stroke-linejoin="round"/><polyline points="2457,1153 2462,1170" fill="none" stroke="#ff8a00" stroke-width="9" stroke-linecap="round" stroke-linejoin="round"/><polyline points="2462,1170 2466,1180" fill="none" stroke="#ffe600" stroke-width="9" stroke-linecap="round" stroke-linejoin="round"/><polyline points="2466,1180 2473,1189" fill="none" stroke="#ff8a00" stroke-width="9" stroke-linecap="round" stroke-linejoin="round"/><polyline points="2389,1216 2400,1240" fill="none" stroke="#ff0000" stroke-width="9" stroke-linecap="round" stroke-linejoin="round"/><polyline points="2400,1240 2410,1254" fill="none" stroke="#ff8a00" stroke-width="9" stroke-linecap="round" stroke-linejoin="round"/><polyline points="2410,1254 2440,1266" fill="none" stroke="#ffe600" stroke-width="9" stroke-linecap="round" stroke-linejoin="round"/><polyline points="2440,1266 2460,1273" fill="none" stroke="#ff0000" stroke-width="9" stroke-linecap="round" stroke-linejoin="round"/><polyline points="1832,1490 1888,1486 1932,1482 2000,1482" fill="none" stroke="#ff0000" stroke-width="9" stroke-linecap="round" stroke-linejoin="round"/><polyline points="2000,1482 2020,1506 2048,1506" fill="none" stroke="#ff8a00" stroke-width="9" stroke-linecap="round" stroke-linejoin="round"/><polyline points="2048,1506 2080,1522 2112,1546 2152,1562" fill="none" stroke="#ffc000" stroke-width="9" stroke-linecap="round" stroke-linejoin="round"/><polyline points="2152,1562 2180,1538 2212,1534" fill="none" stroke="#ff5a00" stroke-width="9" stroke-linecap="round" stroke-linejoin="round"/><polyline points="2212,1534 2216,1562 2228,1574 2268,1602" fill="none" stroke="#ff8a00" stroke-width="9" stroke-linecap="round" stroke-linejoin="round"/><polyline points="2268,1602 2272,1638 2252,1666 2240,1682" fill="none" stroke="#ffe600" stroke-width="9" stroke-linecap="round" stroke-linejoin="round"/><polyline points="2228,1574 2224,1594" fill="none" stroke="#40ff40" stroke-width="9" stroke-linecap="round" stroke-linejoin="round"/><polyline points="2224,1594 2208,1614" fill="none" stroke="#0060ff" stroke-width="9" stroke-linecap="round" stroke-linejoin="round"/><polyline points="1892,1426 1892,1450 1876,1478 1856,1538 1900,1594" fill="none" stroke="#ff0000" stroke-width="9" stroke-linecap="round" stroke-linejoin="round"/><polyline points="1900,1594 1920,1634 1940,1666" fill="none" stroke="#ff8a00" stroke-width="9" stroke-linecap="round" stroke-linejoin="round"/><polyline points="1940,1666 1960,1702" fill="none" stroke="#ff0000" stroke-width="9" stroke-linecap="round" stroke-linejoin="round"/><polyline points="1960,1702 1976,1742" fill="none" stroke="#ffe600" stroke-width="9" stroke-linecap="round" stroke-linejoin="round"/><polyline points="1976,1742 2004,1766" fill="none" stroke="#00e4ff" stroke-width="9" stroke-linecap="round" stroke-linejoin="round"/><polyline points="2004,1766 2008,1754 2010,1730" fill="none" stroke="#0060ff" stroke-width="9" stroke-linecap="round" stroke-linejoin="round"/><polyline points="1940,1666 1968,1634 1988,1606" fill="none" stroke="#ff8a00" stroke-width="9" stroke-linecap="round" stroke-linejoin="round"/><polyline points="1988,1606 2012,1590 2052,1586" fill="none" stroke="#ff0000" stroke-width="9" stroke-linecap="round" stroke-linejoin="round"/><polyline points="2052,1586 2080,1598" fill="none" stroke="#ff8a00" stroke-width="9" stroke-linecap="round" stroke-linejoin="round"/><polyline points="2080,1598 2088,1618 2080,1642 2052,1662 2040,1686" fill="none" stroke="#ff0000" stroke-width="9" stroke-linecap="round" stroke-linejoin="round"/><polyline points="2040,1686 2038,1718" fill="none" stroke="#ff8a00" stroke-width="9" stroke-linecap="round" stroke-linejoin="round"/><polyline points="2038,1718 2032,1738" fill="none" stroke="#c8ff00" stroke-width="9" stroke-linecap="round" stroke-linejoin="round"/><polyline points="1852,1462 1888,1486" fill="none" stroke="#ff0000" stroke-width="9" stroke-linecap="round" stroke-linejoin="round"/><polyline points="1892,1498 1932,1506 1944,1526" fill="none" stroke="#ff0000" stroke-width="9" stroke-linecap="round" stroke-linejoin="round"/><polyline points="1860,1530 1904,1554 1936,1550" fill="none" stroke="#ff0000" stroke-width="9" stroke-linecap="round" stroke-linejoin="round"/><polyline points="1904,1554 1920,1540" fill="none" stroke="#ffe600" stroke-width="9" stroke-linecap="round" stroke-linejoin="round"/><polyline points="1776,1456 1790,1440" fill="none" stroke="#ff0000" stroke-width="9" stroke-linecap="round" stroke-linejoin="round"/><circle cx="2622.2" cy="589.5" r="3.6" fill="#00e4ff"/><circle cx="2591.5" cy="599.2" r="3.9" fill="#30f0a0"/><circle cx="2579.4" cy="603.8" r="3.7" fill="#10b0ff"/><circle cx="2543.7" cy="629.6" r="4.7" fill="#ffe600"/><circle cx="2545.1" cy="649.0" r="5.5" fill="#00e4ff"/><circle cx="2543.2" cy="664.3" r="4.3" fill="#30f0a0"/><circle cx="2499.3" cy="713.6" r="4.2" fill="#30f0a0"/><circle cx="2472.2" cy="723.2" r="4.5" fill="#40ff40"/><circle cx="2725.5" cy="703.7" r="4.9" fill="#30f0a0"/><circle cx="2712.3" cy="713.0" r="4.5" fill="#c8ff00"/><circle cx="2703.7" cy="718.9" r="5.5" fill="#c8ff00"/><circle cx="2694.5" cy="725.2" r="3.8" fill="#30f0a0"/><circle cx="2672.9" cy="741.8" r="4.6" fill="#c8ff00"/><circle cx="2648.2" cy="751.3" r="4.5" fill="#c8ff00"/><circle cx="2628.8" cy="757.0" r="4.4" fill="#30f0a0"/><circle cx="2598.9" cy="791.7" r="4.7" fill="#ffe600"/><circle cx="2523.7" cy="809.4" r="3.8" fill="#30f0a0"/><circle cx="2522.3" cy="808.6" r="3.8" fill="#30f0a0"/><circle cx="2508.7" cy="795.2" r="3.7" fill="#30f0a0"/><circle cx="2403.0" cy="762.3" r="4.9" fill="#10b0ff"/><circle cx="2396.2" cy="770.7" r="3.9" fill="#0060ff"/><circle cx="2394.2" cy="787.0" r="5.2" fill="#30f0a0"/><circle cx="2379.4" cy="802.5" r="4.3" fill="#10b0ff"/><circle cx="2358.2" cy="817.5" r="4.9" fill="#10b0ff"/><circle cx="2338.7" cy="868.5" r="5.1" fill="#30f0a0"/><circle cx="2332.2" cy="871.2" r="4.5" fill="#0010d0"/><circle cx="2293.3" cy="887.0" r="3.8" fill="#c8ff00"/><circle cx="2292.6" cy="887.4" r="4.6" fill="#00e4ff"/><circle cx="2247.8" cy="926.2" r="3.8" fill="#30f0a0"/><circle cx="2252.4" cy="938.1" r="4.4" fill="#10b0ff"/><circle cx="2245.2" cy="945.0" r="4.5" fill="#30f0a0"/><circle cx="2234.6" cy="947.9" r="4.2" fill="#40ff40"/><circle cx="2194.1" cy="999.8" r="4.5" fill="#10b0ff"/><circle cx="2180.6" cy="1007.7" r="3.8" fill="#10b0ff"/><circle cx="2157.2" cy="1014.0" r="5.2" fill="#40ff40"/><circle cx="2128.1" cy="1030.8" r="4.2" fill="#30f0a0"/><circle cx="2115.8" cy="1039.6" r="4.2" fill="#c8ff00"/><circle cx="2102.1" cy="1054.4" r="5.1" fill="#30f0a0"/><circle cx="2041.6" cy="1065.5" r="5.0" fill="#10b0ff"/><circle cx="1993.6" cy="1076.4" r="4.4" fill="#c8ff00"/><circle cx="1972.5" cy="1117.0" r="4.4" fill="#ff8a00"/><circle cx="1961.7" cy="1139.2" r="5.2" fill="#ffb400"/><circle cx="1963.0" cy="1202.3" r="5.1" fill="#ff5a00"/><circle cx="1957.1" cy="1242.8" r="3.7" fill="#ffb400"/><circle cx="1912.0" cy="1338.3" r="3.6" fill="#ff5a00"/><circle cx="1828.3" cy="1395.7" r="3.5" fill="#ff8a00"/><circle cx="1970.5" cy="1245.8" r="4.5" fill="#ff5a00"/><circle cx="1560.5" cy="996.9" r="4.8" fill="#ff0000"/><circle cx="1594.4" cy="1049.8" r="3.5" fill="#ff0000"/><circle cx="1608.0" cy="1072.0" r="3.8" fill="#ff5a00"/><circle cx="1661.4" cy="1174.7" r="3.9" fill="#ffb400"/><circle cx="1664.6" cy="1181.2" r="4.6" fill="#ff5a00"/><circle cx="1720.9" cy="1357.0" r="5.2" fill="#c8ff00"/><circle cx="1721.5" cy="1365.7" r="4.1" fill="#ff5a00"/><circle cx="1762.7" cy="1387.2" r="5.3" fill="#ffe600"/><circle cx="1779.6" cy="1392.4" r="4.2" fill="#ff0000"/><circle cx="1784.1" cy="1393.8" r="3.9" fill="#ff5a00"/><circle cx="1811.8" cy="1397.1" r="5.2" fill="#ff8a00"/><circle cx="1550.0" cy="1052.9" r="4.3" fill="#ff5a00"/><circle cx="1576.9" cy="1078.6" r="4.6" fill="#ff5a00"/><circle cx="1592.7" cy="1099.0" r="4.1" fill="#ff0000"/><circle cx="1619.3" cy="1114.3" r="5.4" fill="#ff5a00"/><circle cx="1622.1" cy="1117.4" r="5.3" fill="#ff8a00"/><circle cx="1631.0" cy="1132.1" r="5.2" fill="#ff5a00"/><circle cx="1658.8" cy="1227.2" r="4.4" fill="#ffe600"/><circle cx="1675.0" cy="1226.2" r="3.7" fill="#ff5a00"/><circle cx="1681.7" cy="1231.3" r="3.6" fill="#ffe600"/><circle cx="1709.5" cy="1258.6" r="4.7" fill="#c8ff00"/><circle cx="1721.1" cy="1272.5" r="5.4" fill="#40ff40"/><circle cx="1724.4" cy="1278.2" r="4.8" fill="#c8ff00"/><circle cx="1725.3" cy="1305.3" r="3.9" fill="#ff8a00"/><circle cx="1721.9" cy="1312.2" r="3.6" fill="#c8ff00"/><circle cx="1714.0" cy="1330.1" r="4.5" fill="#30f0a0"/><circle cx="1710.2" cy="1341.4" r="5.1" fill="#ffe600"/><circle cx="1746.1" cy="1385.5" r="3.9" fill="#ff8a00"/><circle cx="1754.4" cy="1387.6" r="5.0" fill="#ff8a00"/><circle cx="1775.9" cy="1393.0" r="5.2" fill="#40ff40"/><circle cx="1783.5" cy="1394.9" r="4.4" fill="#c8ff00"/><circle cx="1794.7" cy="1404.0" r="5.2" fill="#ffb400"/><circle cx="1835.4" cy="1398.8" r="4.2" fill="#ff5a00"/><circle cx="1884.8" cy="1423.1" r="4.2" fill="#ff5a00"/><circle cx="1889.8" cy="1427.1" r="4.1" fill="#ff0000"/><circle cx="1847.8" cy="1404.9" r="4.3" fill="#ff5a00"/><circle cx="1850.3" cy="1405.2" r="4.8" fill="#ff5a00"/><circle cx="1874.5" cy="1422.6" r="4.8" fill="#ff5a00"/><circle cx="1962.3" cy="1413.7" r="3.8" fill="#ff0000"/><circle cx="2090.2" cy="1348.6" r="4.9" fill="#ff0000"/><circle cx="2104.8" cy="1328.4" r="5.4" fill="#ff5a00"/><circle cx="2119.2" cy="1304.5" r="4.9" fill="#ff0000"/><circle cx="2153.6" cy="1302.4" r="5.4" fill="#ff0000"/><circle cx="2173.6" cy="1305.5" r="5.0" fill="#ff0000"/><circle cx="2192.2" cy="1317.1" r="5.0" fill="#ff0000"/><circle cx="2208.7" cy="1323.7" r="4.5" fill="#ff5a00"/><circle cx="2219.7" cy="1325.9" r="4.1" fill="#ff0000"/><circle cx="2235.1" cy="1329.0" r="3.7" fill="#ffb400"/><circle cx="2265.0" cy="1338.6" r="4.9" fill="#ff0000"/><circle cx="2291.8" cy="1341.8" r="4.0" fill="#ff5a00"/><circle cx="2344.7" cy="1350.2" r="4.4" fill="#ffe600"/><circle cx="2380.8" cy="1387.7" r="3.5" fill="#40ff40"/><circle cx="2430.6" cy="1426.5" r="3.6" fill="#00e4ff"/><circle cx="2104.0" cy="1333.3" r="5.4" fill="#ff5a00"/><circle cx="2104.0" cy="1320.8" r="4.1" fill="#ff0000"/><circle cx="2104.0" cy="1314.4" r="5.3" fill="#ff0000"/><circle cx="2104.0" cy="1295.3" r="4.9" fill="#ff0000"/><circle cx="2139.3" cy="1229.4" r="5.0" fill="#ff5a00"/><circle cx="2146.9" cy="1188.2" r="3.5" fill="#ff0000"/><circle cx="2174.3" cy="1176.5" r="3.7" fill="#ff0000"/><circle cx="2076.7" cy="1243.7" r="5.4" fill="#ff0000"/><circle cx="2103.2" cy="1256.3" r="5.3" fill="#ff0000"/><circle cx="2073.5" cy="1326.6" r="4.7" fill="#ff0000"/><circle cx="2074.6" cy="1339.5" r="3.6" fill="#ff0000"/><circle cx="2076.0" cy="1357.7" r="4.1" fill="#ff5a00"/><circle cx="1968.4" cy="1320.1" r="4.3" fill="#ff0000"/><circle cx="1994.9" cy="1312.0" r="4.5" fill="#ff5a00"/><circle cx="2020.0" cy="1349.7" r="4.0" fill="#ff5a00"/><circle cx="1982.3" cy="1386.6" r="3.8" fill="#ff5a00"/><circle cx="1963.4" cy="1357.3" r="4.3" fill="#ff5a00"/><circle cx="2207.8" cy="1181.7" r="5.4" fill="#ff0000"/><circle cx="2230.4" cy="1156.7" r="5.2" fill="#ff0000"/><circle cx="2257.2" cy="1143.4" r="5.4" fill="#ff0000"/><circle cx="2277.2" cy="1146.0" r="4.8" fill="#ff0000"/><circle cx="2315.2" cy="1104.4" r="4.6" fill="#ff5a00"/><circle cx="2321.2" cy="1094.1" r="4.8" fill="#ff5a00"/><circle cx="2318.7" cy="1043.3" r="3.9" fill="#ff0000"/><circle cx="2350.9" cy="1017.7" r="4.1" fill="#ff0000"/><circle cx="2424.0" cy="976.5" r="4.1" fill="#ff0000"/><circle cx="2194.0" cy="1191.7" r="4.8" fill="#ff0000"/><circle cx="2202.7" cy="1192.8" r="5.4" fill="#ff0000"/><circle cx="2212.3" cy="1194.3" r="4.9" fill="#c8ff00"/><circle cx="2223.9" cy="1207.3" r="5.1" fill="#40ff40"/><circle cx="2274.5" cy="1201.6" r="5.0" fill="#ff5a00"/><circle cx="2281.5" cy="1204.8" r="5.0" fill="#ff5a00"/><circle cx="2320.5" cy="1234.4" r="5.3" fill="#ff0000"/><circle cx="2335.5" cy="1231.0" r="3.6" fill="#ff0000"/><circle cx="2344.8" cy="1236.0" r="3.6" fill="#ff0000"/><circle cx="2351.5" cy="1237.3" r="5.3" fill="#ff0000"/><circle cx="2403.4" cy="1222.0" r="4.4" fill="#ff0000"/><circle cx="2465.6" cy="1201.0" r="4.2" fill="#ff8a00"/><circle cx="2499.4" cy="1166.8" r="4.3" fill="#ff5a00"/><circle cx="2536.6" cy="1200.4" r="4.2" fill="#ff5a00"/><circle cx="2555.0" cy="1199.9" r="3.6" fill="#ff0000"/><circle cx="2581.1" cy="1210.1" r="5.1" fill="#ff8a00"/><circle cx="2587.1" cy="1201.9" r="5.3" fill="#ffb400"/><circle cx="2630.4" cy="1217.0" r="3.6" fill="#c8ff00"/><circle cx="2735.6" cy="1235.3" r="4.5" fill="#ff8a00"/><circle cx="2795.4" cy="1159.2" r="4.1" fill="#ff0000"/><circle cx="2462.4" cy="1121.8" r="4.4" fill="#ff5a00"/><circle cx="2396.7" cy="1232.9" r="3.6" fill="#ff0000"/><circle cx="2424.7" cy="1259.9" r="5.5" fill="#40ff40"/><circle cx="2426.3" cy="1260.5" r="4.3" fill="#40ff40"/><circle cx="1844.7" cy="1489.1" r="4.7" fill="#ff0000"/><circle cx="1908.2" cy="1484.2" r="4.1" fill="#ff5a00"/><circle cx="1957.3" cy="1482.0" r="5.3" fill="#ff5a00"/><circle cx="2031.3" cy="1506.0" r="4.4" fill="#ff0000"/><circle cx="2034.1" cy="1506.0" r="5.2" fill="#ffb400"/><circle cx="2164.1" cy="1551.7" r="3.6" fill="#ffb400"/><circle cx="2197.2" cy="1535.8" r="5.2" fill="#ff0000"/><circle cx="2215.6" cy="1558.9" r="3.7" fill="#ffe600"/><circle cx="2241.7" cy="1583.6" r="3.6" fill="#ffb400"/><circle cx="2265.3" cy="1600.1" r="5.1" fill="#ffb400"/><circle cx="2271.5" cy="1633.5" r="3.9" fill="#40ff40"/><circle cx="2258.0" cy="1657.6" r="4.8" fill="#ffb400"/><circle cx="2245.6" cy="1674.5" r="3.8" fill="#ff8a00"/><circle cx="2213.5" cy="1607.1" r="4.1" fill="#0010d0"/><circle cx="1865.1" cy="1510.7" r="5.4" fill="#ff5a00"/><circle cx="1859.5" cy="1527.4" r="4.3" fill="#ff8a00"/><circle cx="1870.8" cy="1556.8" r="3.8" fill="#ff0000"/><circle cx="1911.7" cy="1617.5" r="4.5" fill="#ffb400"/><circle cx="1923.3" cy="1639.2" r="4.1" fill="#ffb400"/><circle cx="1939.4" cy="1665.1" r="3.6" fill="#ffb400"/><circle cx="1974.9" cy="1739.1" r="4.7" fill="#c8ff00"/><circle cx="1989.7" cy="1753.8" r="3.9" fill="#30f0a0"/><circle cx="1999.5" cy="1762.1" r="4.2" fill="#30f0a0"/><circle cx="2007.9" cy="1754.4" r="3.6" fill="#0010d0"/><circle cx="1947.8" cy="1657.1" r="4.3" fill="#ffe600"/><circle cx="1983.0" cy="1613.0" r="4.8" fill="#ff5a00"/><circle cx="2020.3" cy="1589.2" r="4.4" fill="#ff0000"/><circle cx="2082.6" cy="1634.3" r="3.7" fill="#ff5a00"/><circle cx="2055.4" cy="1659.6" r="5.3" fill="#ff8a00"/><circle cx="2039.2" cy="1698.0" r="4.8" fill="#ff5a00"/><circle cx="2037.6" cy="1719.3" r="5.0" fill="#ffe600"/><circle cx="1875.8" cy="1477.9" r="4.1" fill="#ff0000"/><circle cx="1919.4" cy="1540.5" r="3.9" fill="#ffb400"/><polygon points="1922.7,1264.4 1896.3,1317.3 1949.2,1317.3" fill="#fff" stroke="#333" stroke-width="2.5"/><polygon points="1950.9,1386 1922.7,1438.9 1977.4,1438.9" fill="#a000a8" stroke="#333" stroke-width="2.5"/><polygon points="2371.5,1196.8 2345.7,1248.5 2397.3,1248.5" fill="#a000a8" stroke="#333" stroke-width="2.5"/></svg>
<div class="a" style="left:1803px;top:1291px;font-size:28px;line-height:32px;color:#8a97a3;font-weight:normal;white-space:nowrap;z-index:1;">秋田市</div>
<div class="a" style="left:1831px;top:1328px;font-size:28px;line-height:32px;color:#222;font-weight:normal;white-space:nowrap;z-index:1;paint-order:stroke;-webkit-text-stroke:0;text-shadow:0 0 3px #fff,0 0 3px #fff,0 0 2px #fff">中島（指定）</div>
<div class="a" style="left:1922px;top:1451px;font-size:28px;line-height:32px;color:#222;font-weight:normal;white-space:nowrap;z-index:1;paint-order:stroke;-webkit-text-stroke:0;text-shadow:0 0 3px #fff,0 0 3px #fff,0 0 2px #fff">牛島</div>
<div class="a" style="left:2311px;top:1261px;font-size:28px;line-height:32px;color:#222;font-weight:normal;white-space:nowrap;z-index:1;paint-order:stroke;-webkit-text-stroke:0;text-shadow:0 0 3px #fff,0 0 3px #fff,0 0 2px #fff">太平本町</div>
<div class="a" style="left:910px;top:342px;width:594px;height:89px;background:rgba(255,255,255,.45);border:1px solid #8a8a8a;border-radius:5px;box-sizing:border-box;z-index:1"></div>
<div class="a" style="left:923px;top:344px;font-size:71px;line-height:82px;color:#333;font-weight:normal;white-space:nowrap;z-index:1;line-height:84px">2023-07-15 18:00</div>
<div class="a" style="left:1536px;top:344px;width:803px;height:87px;background:rgba(255,255,255,.45);border:1px solid #8a8a8a;border-radius:5px;box-sizing:border-box;z-index:1"></div>
<svg class="a" style="left:0;top:0;z-index:1" width="2400" height="600" viewBox="0 0 2400 600"><rect x="1547.8" y="355" width="93.5" height="23" fill="#f3f3fb" stroke="#888" stroke-width="1"/><rect x="1641.3" y="355" width="94.70000000000005" height="23" fill="#b5dcfb" stroke="#888" stroke-width="1"/><rect x="1736" y="355" width="91.79999999999995" height="23" fill="#50a5f5" stroke="#888" stroke-width="1"/><rect x="1827.8" y="355" width="94.10000000000014" height="23" fill="#3366ff" stroke="#888" stroke-width="1"/><rect x="1921.9" y="355" width="91.79999999999995" height="23" fill="#f8f840" stroke="#888" stroke-width="1"/><rect x="2013.7" y="355" width="93.49999999999977" height="23" fill="#ffb030" stroke="#888" stroke-width="1"/><rect x="2107.2" y="355" width="93.5" height="23" fill="#ff5a32" stroke="#888" stroke-width="1"/><rect x="2200.7" y="355" width="92.30000000000018" height="23" fill="#c83c8c" stroke="#888" stroke-width="1"/></svg>
<div class="a" style="left:1591.3px;top:388px;width:100px;text-align:center;font-size:28px;line-height:34px;color:#333;z-index:1">1</div>
<div class="a" style="left:1686px;top:388px;width:100px;text-align:center;font-size:28px;line-height:34px;color:#333;z-index:1">10</div>
<div class="a" style="left:1777.8px;top:388px;width:100px;text-align:center;font-size:28px;line-height:34px;color:#333;z-index:1">30</div>
<div class="a" style="left:1871.9px;top:388px;width:100px;text-align:center;font-size:28px;line-height:34px;color:#333;z-index:1">50</div>
<div class="a" style="left:1963.7px;top:388px;width:100px;text-align:center;font-size:28px;line-height:34px;color:#333;z-index:1">100</div>
<div class="a" style="left:2057.2px;top:388px;width:100px;text-align:center;font-size:28px;line-height:34px;color:#333;z-index:1">150</div>
<div class="a" style="left:2150.7px;top:388px;width:100px;text-align:center;font-size:28px;line-height:34px;color:#333;z-index:1">200</div>
<div class="a" style="left:2248px;top:388px;font-size:28px;line-height:32px;color:#333;font-weight:normal;white-space:nowrap;z-index:1;">mm/h</div>
<div class="a" style="left:910px;top:466px;width:787px;height:86px;background:rgba(255,255,255,.45);border:1px solid #8a8a8a;border-radius:5px;box-sizing:border-box;z-index:1"></div>
<svg class="a" style="left:0;top:0;z-index:1" width="2400" height="600" viewBox="0 0 2400 600"><rect x="915" y="477" width="94.39999999999998" height="22" fill="#0000c8" stroke="#777" stroke-width="1"/><rect x="1009.4" y="477" width="93.60000000000002" height="22" fill="#0050ff" stroke="#777" stroke-width="1"/><rect x="1103" y="477" width="91.70000000000005" height="22" fill="#00e8ff" stroke="#777" stroke-width="1"/><rect x="1194.7" y="477" width="93.5" height="22" fill="#50ff20" stroke="#777" stroke-width="1"/><rect x="1288.2" y="477" width="92.39999999999986" height="22" fill="#ffff00" stroke="#777" stroke-width="1"/><rect x="1380.6" y="477" width="93.40000000000009" height="22" fill="#ffaa00" stroke="#777" stroke-width="1"/><rect x="1474" y="477" width="94.79999999999995" height="22" fill="#ff5000" stroke="#777" stroke-width="1"/><rect x="1568.8" y="477" width="91.79999999999995" height="22" fill="#ff0000" stroke="#777" stroke-width="1"/></svg>
<div class="a" style="left:865px;top:511px;width:100px;text-align:center;font-size:28px;line-height:34px;color:#333;z-index:1">0</div>
<div class="a" style="left:959.4px;top:511px;width:100px;text-align:center;font-size:28px;line-height:34px;color:#333;z-index:1">2</div>
<div class="a" style="left:1053px;top:511px;width:100px;text-align:center;font-size:28px;line-height:34px;color:#333;z-index:1">8</div>
<div class="a" style="left:1144.7px;top:511px;width:100px;text-align:center;font-size:28px;line-height:34px;color:#333;z-index:1">17</div>
<div class="a" style="left:1238.2px;top:511px;width:100px;text-align:center;font-size:28px;line-height:34px;color:#333;z-index:1">33</div>
<div class="a" style="left:1330.6px;top:511px;width:100px;text-align:center;font-size:28px;line-height:34px;color:#333;z-index:1">50</div>
<div class="a" style="left:1424px;top:511px;width:100px;text-align:center;font-size:28px;line-height:34px;color:#333;z-index:1">67</div>
<div class="a" style="left:1518.8px;top:511px;width:100px;text-align:center;font-size:28px;line-height:34px;color:#333;z-index:1">83</div>
<div class="a" style="left:1617px;top:511px;font-size:28px;line-height:32px;color:#333;font-weight:normal;white-space:nowrap;z-index:1;">100%</div>
<div class="a" style="left:906px;top:1000px;width:88px;height:104px;background:#bdbdbd;border-radius:0 6px 6px 0;z-index:1"></div>
<svg class="a" style="left:926px;top:1032px;z-index:1" width="46" height="50" viewBox="0 0 46 50"><path d="M23 3 C17 12 5 22 5 32 A18 18 0 0 0 41 32 C41 22 29 12 23 3Z" fill="none" stroke="#333" stroke-width="4"/><path d="M5 30 L41 30 A18 18 0 0 1 5 30Z" fill="#333"/></svg>
<div class="a" style="left:906px;top:1116px;width:88px;height:115px;background:#555;border-radius:0 6px 0 0;z-index:1"></div>
<div class="a" style="left:906px;top:1131px;width:88px;text-align:center;font-size:33px;line-height:36px;color:#fff;font-weight:bold;z-index:1">降<br>雨</div>
<div class="a" style="left:906px;top:1231px;width:87px;height:116px;background:#bdbdbd;border-radius:0 0 6px 0;z-index:1"></div>
<div class="a" style="left:906px;top:1250px;width:88px;text-align:center;font-size:33px;line-height:36px;color:#444;z-index:1">水<br>深</div>
<div class="a" style="left:3120px;top:343px;width:81px;height:84px;background:#b6c6da;border:2px solid #8f9aa6;border-radius:6px;box-sizing:border-box;box-shadow:0 2px 3px rgba(0,0,0,.25);z-index:1"></div>
<svg class="a" style="left:3135px;top:358px;z-index:1" width="52" height="52" viewBox="0 0 24 24"><path fill="#333" d="M11.99 18.54l-7.37-5.73L3 14.07l9 7 9-7-1.63-1.27-7.38 5.74zM12 16l7.36-5.73L21 9l-9-7-9 7 1.63 1.27L12 16z"/></svg>
<div class="a" style="left:2503px;top:1913px;width:705px;height:61px;background:rgba(255,255,255,.45);border:2px solid #888;border-radius:9px;box-sizing:border-box;z-index:1"></div>
<div class="a" style="left:2518px;top:1922px;font-size:42px;line-height:48px;color:#333;font-weight:normal;white-space:nowrap;z-index:1;line-height:48px">1 : 172,794</div>
<svg class="a" style="left:0;top:0;z-index:1" width="4400" height="2133" viewBox="0 0 4400 2133"><rect x="2744" y="1920" width="7" height="49" fill="#666"/><rect x="3114.5" y="1920" width="6.5" height="49" fill="#666"/><rect x="2744" y="1956" width="377" height="13" fill="#666"/><rect x="2747" y="1958" width="95" height="8" fill="#fff"/><rect x="2931" y="1958" width="92" height="8" fill="#fff"/><rect x="2747" y="1923" width="2" height="36" fill="#fff" opacity=".8"/></svg>
<div class="a" style="left:3046px;top:1921px;font-size:33px;line-height:38px;color:#555;font-weight:bold;white-space:nowrap;z-index:1;line-height:38px">6km</div>
<div class="a" style="left:2737px;top:1978px;width:475px;height:49px;background:rgba(255,255,255,.45);border-radius:8px 0 0 0;z-index:1"></div>
<div class="a" style="left:2756px;top:1984px;font-size:32px;line-height:37px;color:#222;font-weight:normal;white-space:nowrap;z-index:1;line-height:36px">© <span style="color:#4a70a8">OpenStreetMap</span> contributors.</div>
<svg class="a" style="left:0;top:0;z-index:1" width="4400" height="2133" viewBox="0 0 4400 2133"><line x1="1483.7" y1="2075.4" x2="2621.7" y2="2075.4" stroke="#cfcfcf" stroke-width="3"/><line x1="1483.7" y1="2069" x2="1483.7" y2="2079.5" stroke="#555" stroke-width="2.5"/><line x1="1531.1" y1="2069" x2="1531.1" y2="2075.4" stroke="#555" stroke-width="1.8"/><line x1="1578.5" y1="2069" x2="1578.5" y2="2075.4" stroke="#555" stroke-width="1.8"/><line x1="1626.0" y1="2069" x2="1626.0" y2="2079.5" stroke="#555" stroke-width="2.5"/><line x1="1673.4" y1="2069" x2="1673.4" y2="2075.4" stroke="#555" stroke-width="1.8"/><line x1="1720.8" y1="2069" x2="1720.8" y2="2075.4" stroke="#555" stroke-width="1.8"/><line x1="1768.2" y1="2069" x2="1768.2" y2="2079.5" stroke="#555" stroke-width="2.5"/><line x1="1815.6" y1="2069" x2="1815.6" y2="2075.4" stroke="#555" stroke-width="1.8"/><line x1="1863.1" y1="2069" x2="1863.1" y2="2075.4" stroke="#555" stroke-width="1.8"/><line x1="1910.5" y1="2069" x2="1910.5" y2="2079.5" stroke="#555" stroke-width="2.5"/><line x1="1957.9" y1="2069" x2="1957.9" y2="2075.4" stroke="#555" stroke-width="1.8"/><line x1="2005.3" y1="2069" x2="2005.3" y2="2075.4" stroke="#555" stroke-width="1.8"/><line x1="2052.7" y1="2069" x2="2052.7" y2="2079.5" stroke="#555" stroke-width="2.5"/><line x1="2100.2" y1="2069" x2="2100.2" y2="2075.4" stroke="#555" stroke-width="1.8"/><line x1="2147.6" y1="2069" x2="2147.6" y2="2075.4" stroke="#555" stroke-width="1.8"/><line x1="2195.0" y1="2069" x2="2195.0" y2="2079.5" stroke="#555" stroke-width="2.5"/><line x1="2242.4" y1="2069" x2="2242.4" y2="2075.4" stroke="#555" stroke-width="1.8"/><line x1="2289.8" y1="2069" x2="2289.8" y2="2075.4" stroke="#555" stroke-width="1.8"/><line x1="2337.3" y1="2069" x2="2337.3" y2="2079.5" stroke="#555" stroke-width="2.5"/><line x1="2384.7" y1="2069" x2="2384.7" y2="2075.4" stroke="#555" stroke-width="1.8"/><line x1="2432.1" y1="2069" x2="2432.1" y2="2075.4" stroke="#555" stroke-width="1.8"/><line x1="2479.5" y1="2069" x2="2479.5" y2="2079.5" stroke="#555" stroke-width="2.5"/><line x1="2526.9" y1="2069" x2="2526.9" y2="2075.4" stroke="#555" stroke-width="1.8"/><line x1="2574.4" y1="2069" x2="2574.4" y2="2075.4" stroke="#555" stroke-width="1.8"/><line x1="2621.8" y1="2069" x2="2621.8" y2="2079.5" stroke="#555" stroke-width="2.5"/><circle cx="2336.4" cy="2074.3" r="13.5" fill="#757575"/><rect x="1396.3" y="2068.4" width="3.5" height="24" fill="#666"/><polygon points="1423.1,2068.4 1405.6,2080.4 1423.1,2092.4" fill="#666"/><rect x="2704" y="2068.4" width="3.5" height="24" fill="#666"/><polygon points="2681.6,2068.4 2699.5,2080.4 2681.6,2092.4" fill="#666"/></svg>
<div class="a" style="left:1384px;top:2093px;width:200px;text-align:center;font-size:29px;line-height:32px;color:#444;z-index:1">18時間前</div>
<div class="a" style="left:1526.9px;top:2093px;width:200px;text-align:center;font-size:29px;line-height:32px;color:#444;z-index:1">15</div>
<div class="a" style="left:1668.5px;top:2093px;width:200px;text-align:center;font-size:29px;line-height:32px;color:#444;z-index:1">12</div>
<div class="a" style="left:1810px;top:2093px;width:200px;text-align:center;font-size:29px;line-height:32px;color:#444;z-index:1">9</div>
<div class="a" style="left:1952px;top:2093px;width:200px;text-align:center;font-size:29px;line-height:32px;color:#444;z-index:1">6</div>
<div class="a" style="left:2094.5px;top:2093px;width:200px;text-align:center;font-size:29px;line-height:32px;color:#444;z-index:1">3</div>
<div class="a" style="left:2236.6px;top:2093px;width:200px;text-align:center;font-size:29px;line-height:32px;color:#444;z-index:1">現在</div>
<div class="a" style="left:2379.3px;top:2093px;width:200px;text-align:center;font-size:29px;line-height:32px;color:#444;z-index:1">3</div>
<div class="a" style="left:2521.5px;top:2093px;width:200px;text-align:center;font-size:29px;line-height:32px;color:#444;z-index:1">6時間後</div>
<div class="a" style="left:3214px;top:312px;width:1186px;height:1821px;background:#fff"></div>
<div class="a" style="left:4382px;top:339px;width:12px;height:1172px;background:#c1c1c1;border-radius:6px"></div>
<div class="a" style="left:4380px;top:318px;width:0;height:0;border-left:8px solid transparent;border-right:8px solid transparent;border-bottom:8px solid #bbb"></div>
<div class="a" style="left:4380px;top:2118px;width:0;height:0;border-left:8px solid transparent;border-right:8px solid transparent;border-top:8px solid #bbb"></div>
<div class="a" style="left:3234px;top:322px;width:1142px;height:642px;background:#fff;border-radius:8px;box-shadow:0 1px 3px rgba(0,0,0,.28),0 0 1px rgba(0,0,0,.12)"></div>
<div class="a" style="left:3275px;top:356px;font-size:38px;line-height:44px;color:#444;font-weight:normal;white-space:nowrap;z-index:1;">降雨 37mm/6hの予想</div>
<div class="a" style="left:4104px;top:341px;width:163px;height:77px;background:#eeeeee;border-radius:8px;text-align:center;line-height:77px;font-size:34px;color:#444;z-index:1">詳細</div>
<svg class="a" style="left:4277px;top:350px;z-index:1" width="56" height="56" viewBox="0 0 24 24"><path fill="#222" d="M12 8l-6 6 1.41 1.41L12 10.83l4.59 4.58L18 14z"/></svg>
<div class="a" style="left:3234px;top:1002px;width:1142px;height:645px;background:#fff;border-radius:8px;box-shadow:0 1px 3px rgba(0,0,0,.28),0 0 1px rgba(0,0,0,.12)"></div>
<div class="a" style="left:3275px;top:1036px;font-size:38px;line-height:44px;color:#444;font-weight:normal;white-space:nowrap;z-index:1;">太平本町 レベル4 氾濫危険水位を超える予想</div>
<div class="a" style="left:4104px;top:1021px;width:163px;height:77px;background:#eeeeee;border-radius:8px;text-align:center;line-height:77px;font-size:34px;color:#444;z-index:1">詳細</div>
<svg class="a" style="left:4277px;top:1030px;z-index:1" width="56" height="56" viewBox="0 0 24 24"><path fill="#222" d="M12 8l-6 6 1.41 1.41L12 10.83l4.59 4.58L18 14z"/></svg>
<div class="a" style="left:3234px;top:1685px;width:1142px;height:515px;background:#fff;border-radius:8px;box-shadow:0 1px 3px rgba(0,0,0,.28),0 0 1px rgba(0,0,0,.12)"></div>
<div class="a" style="left:3275px;top:1719px;font-size:38px;line-height:44px;color:#444;font-weight:normal;white-space:nowrap;z-index:1;">牛島 レベル4 氾濫危険水位を超える予想</div>
<div class="a" style="left:4104px;top:1704px;width:163px;height:77px;background:#eeeeee;border-radius:8px;text-align:center;line-height:77px;font-size:34px;color:#444;z-index:1">詳細</div>
<svg class="a" style="left:4277px;top:1713px;z-index:1" width="56" height="56" viewBox="0 0 24 24"><path fill="#222" d="M12 8l-6 6 1.41 1.41L12 10.83l4.59 4.58L18 14z"/></svg>
<svg class="a" style="left:0;top:0;z-index:1" width="4400" height="2133" viewBox="0 0 4400 2133"><rect x="3372.5" y="456.7" width="849.8999999999996" height="322.90000000000003" fill="#e5e5e5"/><line x1="3372.5" y1="456.7" x2="4222.4" y2="456.7" stroke="#c4c4c4" stroke-width="1.5"/><line x1="3372.5" y1="497.1" x2="4222.4" y2="497.1" stroke="#c4c4c4" stroke-width="1.5"/><line x1="3372.5" y1="537.4" x2="4222.4" y2="537.4" stroke="#c4c4c4" stroke-width="1.5"/><line x1="3372.5" y1="577.8" x2="4222.4" y2="577.8" stroke="#c4c4c4" stroke-width="1.5"/><line x1="3372.5" y1="618.1" x2="4222.4" y2="618.1" stroke="#c4c4c4" stroke-width="1.5"/><line x1="3372.5" y1="658.5" x2="4222.4" y2="658.5" stroke="#c4c4c4" stroke-width="1.5"/><line x1="3372.5" y1="698.9" x2="4222.4" y2="698.9" stroke="#c4c4c4" stroke-width="1.5"/><line x1="3372.5" y1="739.2" x2="4222.4" y2="739.2" stroke="#c4c4c4" stroke-width="1.5"/><line x1="3372.5" y1="779.6" x2="4222.4" y2="779.6" stroke="#c4c4c4" stroke-width="1.5"/><line x1="3372.5" y1="456.7" x2="3372.5" y2="779.6" stroke="#c4c4c4" stroke-width="1.5"/><line x1="3424.6" y1="456.7" x2="3424.6" y2="779.6" stroke="#c4c4c4" stroke-width="1.5"/><line x1="3476.6" y1="456.7" x2="3476.6" y2="779.6" stroke="#c4c4c4" stroke-width="1.5"/><line x1="3528.7" y1="456.7" x2="3528.7" y2="779.6" stroke="#c4c4c4" stroke-width="1.5"/><line x1="3580.8" y1="456.7" x2="3580.8" y2="779.6" stroke="#c4c4c4" stroke-width="1.5"/><line x1="3632.8" y1="456.7" x2="3632.8" y2="779.6" stroke="#c4c4c4" stroke-width="1.5"/><line x1="3684.9" y1="456.7" x2="3684.9" y2="779.6" stroke="#c4c4c4" stroke-width="1.5"/><line x1="3737.0" y1="456.7" x2="3737.0" y2="779.6" stroke="#c4c4c4" stroke-width="1.5"/><line x1="3789.1" y1="456.7" x2="3789.1" y2="779.6" stroke="#c4c4c4" stroke-width="1.5"/><line x1="3841.1" y1="456.7" x2="3841.1" y2="779.6" stroke="#c4c4c4" stroke-width="1.5"/><line x1="3893.2" y1="456.7" x2="3893.2" y2="779.6" stroke="#c4c4c4" stroke-width="1.5"/><line x1="3945.3" y1="456.7" x2="3945.3" y2="779.6" stroke="#c4c4c4" stroke-width="1.5"/><line x1="3997.3" y1="456.7" x2="3997.3" y2="779.6" stroke="#c4c4c4" stroke-width="1.5"/><line x1="4049.4" y1="456.7" x2="4049.4" y2="779.6" stroke="#c4c4c4" stroke-width="1.5"/><line x1="4101.5" y1="456.7" x2="4101.5" y2="779.6" stroke="#c4c4c4" stroke-width="1.5"/><line x1="4153.6" y1="456.7" x2="4153.6" y2="779.6" stroke="#c4c4c4" stroke-width="1.5"/><line x1="4205.6" y1="456.7" x2="4205.6" y2="779.6" stroke="#c4c4c4" stroke-width="1.5"/><rect x="3373.0" y="766.7" width="14.6" height="12.9" fill="#0095ff"/><rect x="3407.7" y="767.5" width="14.6" height="12.1" fill="#0095ff"/><rect x="3425.1" y="759.8" width="14.6" height="19.8" fill="#0095ff"/><rect x="3442.4" y="770.7" width="14.6" height="8.9" fill="#0095ff"/><rect x="3459.8" y="769.1" width="14.6" height="10.5" fill="#0095ff"/><rect x="3477.2" y="753.0" width="14.6" height="26.6" fill="#0095ff"/><rect x="3494.5" y="750.9" width="14.6" height="28.7" fill="#0095ff"/><rect x="3511.9" y="748.5" width="14.6" height="31.1" fill="#0095ff"/><rect x="3529.2" y="741.3" width="14.6" height="38.3" fill="#0095ff"/><rect x="3546.6" y="719.1" width="14.6" height="60.5" fill="#0095ff"/><rect x="3564.0" y="711.8" width="14.6" height="67.8" fill="#0095ff"/><rect x="3581.3" y="719.5" width="14.6" height="60.1" fill="#0095ff"/><rect x="3598.7" y="727.5" width="14.6" height="52.1" fill="#0095ff"/><rect x="3616.0" y="730.4" width="14.6" height="49.2" fill="#0095ff"/><rect x="3633.4" y="730.4" width="14.6" height="49.2" fill="#0095ff"/><rect x="3650.8" y="721.1" width="14.6" height="58.5" fill="#0095ff"/><rect x="3668.1" y="713.8" width="14.6" height="65.8" fill="#0095ff"/><rect x="3685.5" y="713.8" width="14.6" height="65.8" fill="#0095ff"/><rect x="3702.8" y="700.9" width="14.6" height="78.7" fill="#0095ff"/><rect x="3720.2" y="688.4" width="14.6" height="91.2" fill="#0095ff"/><rect x="3737.6" y="693.6" width="14.6" height="86.0" fill="#0095ff"/><rect x="3754.9" y="719.1" width="14.6" height="60.5" fill="#0095ff"/><rect x="3772.3" y="714.6" width="14.6" height="65.0" fill="#0095ff"/><rect x="3789.6" y="721.1" width="14.6" height="58.5" fill="#0095ff"/><rect x="3807.0" y="721.1" width="14.6" height="58.5" fill="#0095ff"/><rect x="3824.4" y="721.1" width="14.6" height="58.5" fill="#0095ff"/><rect x="3841.7" y="716.6" width="14.6" height="63.0" fill="#0095ff"/><rect x="3859.1" y="712.6" width="14.6" height="67.0" fill="#0095ff"/><rect x="3876.4" y="706.5" width="14.6" height="73.1" fill="#0095ff"/><rect x="3893.8" y="696.0" width="14.6" height="83.6" fill="#0095ff"/><rect x="3911.2" y="711.4" width="14.6" height="68.2" fill="#0095ff"/><rect x="3928.5" y="731.2" width="14.6" height="48.4" fill="#0095ff"/><rect x="3945.9" y="759.8" width="14.6" height="19.8" fill="#0095ff"/><rect x="3963.2" y="759.8" width="14.6" height="19.8" fill="#0095ff"/><rect x="3980.6" y="763.5" width="14.6" height="16.1" fill="#0095ff"/><rect x="3998.0" y="762.2" width="14.6" height="17.4" fill="#0095ff"/><rect x="4015.3" y="741.3" width="14.6" height="38.3" fill="#0095ff"/><rect x="4032.7" y="741.3" width="14.6" height="38.3" fill="#0095ff"/><rect x="4050.0" y="761.0" width="14.6" height="18.6" fill="#0095ff"/><rect x="4067.4" y="759.8" width="14.6" height="19.8" fill="#0095ff"/><rect x="4084.8" y="759.8" width="14.6" height="19.8" fill="#0095ff"/><rect x="4102.1" y="759.8" width="14.6" height="19.8" fill="#0095ff"/><rect x="4119.5" y="759.8" width="14.6" height="19.8" fill="#0095ff"/><rect x="4136.8" y="759.8" width="14.6" height="19.8" fill="#0095ff"/><rect x="4154.2" y="757.8" width="14.6" height="21.8" fill="#0095ff"/><rect x="4171.6" y="757.8" width="14.6" height="21.8" fill="#0095ff"/><rect x="4188.9" y="741.3" width="14.6" height="38.3" fill="#0095ff"/><rect x="4206.3" y="741.3" width="14.6" height="38.3" fill="#0095ff"/><line x1="3372.5" y1="456.7" x2="3372.5" y2="779.6" stroke="#888" stroke-width="2"/><line x1="3372.5" y1="779.6" x2="4222.4" y2="779.6" stroke="#999" stroke-width="2"/><line x1="4005.6" y1="456.7" x2="4005.6" y2="779.6" stroke="#666" stroke-width="3" stroke-dasharray="10,7"/><polyline points="3381.7,776.7 3407.7,773 3436.5,768.6 3465.3,767.3 3494.1,757.1 3528.7,747 3546,739.9 3569.1,725.4 3592.1,713.9 3632.5,696.6 3661.3,679.3 3693,662 3713.2,647.6 3744.9,623 3776.6,604.3 3795,595 3833.2,575.5 3870.7,555.3 3899.5,533.7 3916.8,522.2 3937,513.5 3963,509.2 4003.3,503.4 4040.8,491.9 4078.3,484.7 4121.5,476 4150.4,471.7 4179.2,467.4 4212.3,457.9" fill="none" stroke="#ff3c00" stroke-width="6" stroke-linejoin="round" stroke-linecap="round"/><text x="3387.5" y="801" transform="rotate(-45 3387.5 801)" text-anchor="end" font-size="30" fill="#666" font-family="Liberation Sans">00:00</text><text x="3439.6" y="801" transform="rotate(-45 3439.6 801)" text-anchor="end" font-size="30" fill="#666" font-family="Liberation Sans">01:30</text><text x="3491.6" y="801" transform="rotate(-45 3491.6 801)" text-anchor="end" font-size="30" fill="#666" font-family="Liberation Sans">03:00</text><text x="3543.7" y="801" transform="rotate(-45 3543.7 801)" text-anchor="end" font-size="30" fill="#666" font-family="Liberation Sans">04:30</text><text x="3595.8" y="801" transform="rotate(-45 3595.8 801)" text-anchor="end" font-size="30" fill="#666" font-family="Liberation Sans">06:00</text><text x="3647.8" y="801" transform="rotate(-45 3647.8 801)" text-anchor="end" font-size="30" fill="#666" font-family="Liberation Sans">07:30</text><text x="3699.9" y="801" transform="rotate(-45 3699.9 801)" text-anchor="end" font-size="30" fill="#666" font-family="Liberation Sans">09:00</text><text x="3752.0" y="801" transform="rotate(-45 3752.0 801)" text-anchor="end" font-size="30" fill="#666" font-family="Liberation Sans">10:30</text><text x="3804.1" y="801" transform="rotate(-45 3804.1 801)" text-anchor="end" font-size="30" fill="#666" font-family="Liberation Sans">12:00</text><text x="3856.1" y="801" transform="rotate(-45 3856.1 801)" text-anchor="end" font-size="30" fill="#666" font-family="Liberation Sans">13:30</text><text x="3908.2" y="801" transform="rotate(-45 3908.2 801)" text-anchor="end" font-size="30" fill="#666" font-family="Liberation Sans">15:00</text><text x="3960.3" y="801" transform="rotate(-45 3960.3 801)" text-anchor="end" font-size="30" fill="#666" font-family="Liberation Sans">16:30</text><text x="4012.3" y="801" transform="rotate(-45 4012.3 801)" text-anchor="end" font-size="30" fill="#666" font-family="Liberation Sans">18:00</text><text x="4064.4" y="801" transform="rotate(-45 4064.4 801)" text-anchor="end" font-size="30" fill="#666" font-family="Liberation Sans">19:30</text><text x="4116.5" y="801" transform="rotate(-45 4116.5 801)" text-anchor="end" font-size="30" fill="#666" font-family="Liberation Sans">21:00</text><text x="4168.6" y="801" transform="rotate(-45 4168.6 801)" text-anchor="end" font-size="30" fill="#666" font-family="Liberation Sans">22:30</text><text x="4220.6" y="801" transform="rotate(-45 4220.6 801)" text-anchor="end" font-size="30" fill="#666" font-family="Liberation Sans">00:00</text></svg>
<div class="a" style="left:3300px;top:435px;width:58px;text-align:right;font-size:32px;line-height:36px;color:#555;z-index:1">80</div>
<div class="a" style="left:3300px;top:475px;width:58px;text-align:right;font-size:32px;line-height:36px;color:#555;z-index:1">70</div>
<div class="a" style="left:3300px;top:515px;width:58px;text-align:right;font-size:32px;line-height:36px;color:#555;z-index:1">60</div>
<div class="a" style="left:3300px;top:556px;width:58px;text-align:right;font-size:32px;line-height:36px;color:#555;z-index:1">50</div>
<div class="a" style="left:3300px;top:596px;width:58px;text-align:right;font-size:32px;line-height:36px;color:#555;z-index:1">40</div>
<div class="a" style="left:3300px;top:637px;width:58px;text-align:right;font-size:32px;line-height:36px;color:#555;z-index:1">30</div>
<div class="a" style="left:3300px;top:677px;width:58px;text-align:right;font-size:32px;line-height:36px;color:#555;z-index:1">20</div>
<div class="a" style="left:3300px;top:717px;width:58px;text-align:right;font-size:32px;line-height:36px;color:#555;z-index:1">10</div>
<div class="a" style="left:3300px;top:758px;width:58px;text-align:right;font-size:32px;line-height:36px;color:#555;z-index:1">0</div>
<div class="a" style="left:4233px;top:436px;font-size:32px;line-height:36px;color:#555;z-index:1">250</div>
<div class="a" style="left:4233px;top:500px;font-size:32px;line-height:36px;color:#555;z-index:1">200</div>
<div class="a" style="left:4233px;top:565px;font-size:32px;line-height:36px;color:#555;z-index:1">150</div>
<div class="a" style="left:4233px;top:629px;font-size:32px;line-height:36px;color:#555;z-index:1">100</div>
<div class="a" style="left:4233px;top:694px;font-size:32px;line-height:36px;color:#555;z-index:1">50</div>
<div class="a" style="left:4233px;top:759px;font-size:32px;line-height:36px;color:#555;z-index:1">0</div>
<div class="a" style="left:3281px;top:618px;width:0;height:0;z-index:1"><div style="position:absolute;left:-150px;top:-20px;width:300px;text-align:center;font-size:30px;line-height:40px;color:#666;transform:rotate(-90deg);white-space:nowrap">降水量(mm/h)</div></div>
<div class="a" style="left:4332px;top:620px;width:0;height:0;z-index:1"><div style="position:absolute;left:-150px;top:-20px;width:300px;text-align:center;font-size:30px;line-height:40px;color:#666;transform:rotate(90deg);white-space:nowrap">累積雨量(mm)</div></div>
<div class="a" style="left:3535px;top:885px;width:108px;height:36px;background:#ff3c00;z-index:1"></div>
<div class="a" style="left:3655px;top:884px;font-size:31px;line-height:36px;color:#666;font-weight:normal;white-space:nowrap;z-index:1;">累積雨量</div>
<div class="a" style="left:3801px;top:885px;width:104px;height:36px;background:#0095ff;z-index:1"></div>
<div class="a" style="left:3919px;top:884px;font-size:31px;line-height:36px;color:#666;font-weight:normal;white-space:nowrap;z-index:1;">時間降水量</div>
<svg class="a" style="left:0;top:0;z-index:1" width="4400" height="2133" viewBox="0 0 4400 2133"><rect x="3365.3" y="1138.6" width="969.6999999999998" height="323.4000000000001" fill="#e5e5e5"/><polygon points="3370.9,1415.8 3370.9,1263.0 3379.4,1263.0 3387.8,1271.4 3393.4,1263.0 3424.2,1257.4 3432.6,1255.8 3441.0,1265.8 3474.6,1267.0 3483.0,1260.2 3488.6,1282.7 3499.9,1288.3 3516.7,1316.3 3536.3,1333.1 3547.5,1361.1 3558.7,1344.3 3586.7,1277.1 3620.4,1226.6 3659.6,1207.0 3673.6,1195.8 3693.2,1212.6 3732.5,1204.2 3738.1,1209.8 3760.5,1212.6 3788.5,1302.3 3796.9,1434.0 3838.9,1431.2 3883.8,1442.4 3892.2,1428.4 3900.6,1445.2 3906.2,1417.2 3934.2,1324.7 3951.0,1279.9 3973.5,1249.0 4007.1,1215.4 4029.5,1184.6 4049.1,1176.2 4074.3,1186.3 4096.8,1181.8 4119.2,1193.0 4152.8,1207.0 4180.8,1204.2 4208.9,1207.0 4231.3,1209.8 4253.7,1232.2 4262.1,1249.0 4267.7,1282.7 4276.1,1288.3 4281.7,1254.6 4309.7,1237.8 4315.3,1249.0 4335.0,1249.0 4335.0,1415.8" fill="#cfcfcf" stroke="#aaa" stroke-width="1.5"/><line x1="3365.3" y1="1138.6" x2="4335" y2="1138.6" stroke="#c0c0c0" stroke-width="1.5"/><line x1="3365.3" y1="1184.8" x2="4335" y2="1184.8" stroke="#c0c0c0" stroke-width="1.5"/><line x1="3365.3" y1="1231.0" x2="4335" y2="1231.0" stroke="#c0c0c0" stroke-width="1.5"/><line x1="3365.3" y1="1277.2" x2="4335" y2="1277.2" stroke="#c0c0c0" stroke-width="1.5"/><line x1="3365.3" y1="1323.4" x2="4335" y2="1323.4" stroke="#c0c0c0" stroke-width="1.5"/><line x1="3365.3" y1="1369.6" x2="4335" y2="1369.6" stroke="#c0c0c0" stroke-width="1.5"/><line x1="3365.3" y1="1415.8" x2="4335" y2="1415.8" stroke="#999" stroke-width="1.5"/><line x1="3365.3" y1="1462.0" x2="4335" y2="1462.0" stroke="#c0c0c0" stroke-width="1.5"/><line x1="3365.3" y1="1138.6" x2="3365.3" y2="1462" stroke="#b8b8b8" stroke-width="1.5"/><line x1="3412.5" y1="1138.6" x2="3412.5" y2="1462" stroke="#b8b8b8" stroke-width="1.5"/><line x1="3459.7" y1="1138.6" x2="3459.7" y2="1462" stroke="#b8b8b8" stroke-width="1.5"/><line x1="3507.0" y1="1138.6" x2="3507.0" y2="1462" stroke="#b8b8b8" stroke-width="1.5"/><line x1="3554.2" y1="1138.6" x2="3554.2" y2="1462" stroke="#b8b8b8" stroke-width="1.5"/><line x1="3601.4" y1="1138.6" x2="3601.4" y2="1462" stroke="#b8b8b8" stroke-width="1.5"/><line x1="3648.6" y1="1138.6" x2="3648.6" y2="1462" stroke="#b8b8b8" stroke-width="1.5"/><line x1="3695.8" y1="1138.6" x2="3695.8" y2="1462" stroke="#b8b8b8" stroke-width="1.5"/><line x1="3743.1" y1="1138.6" x2="3743.1" y2="1462" stroke="#b8b8b8" stroke-width="1.5"/><line x1="3790.3" y1="1138.6" x2="3790.3" y2="1462" stroke="#b8b8b8" stroke-width="1.5"/><line x1="3837.5" y1="1138.6" x2="3837.5" y2="1462" stroke="#b8b8b8" stroke-width="1.5"/><line x1="3884.7" y1="1138.6" x2="3884.7" y2="1462" stroke="#b8b8b8" stroke-width="1.5"/><line x1="3931.9" y1="1138.6" x2="3931.9" y2="1462" stroke="#b8b8b8" stroke-width="1.5"/><line x1="3979.2" y1="1138.6" x2="3979.2" y2="1462" stroke="#b8b8b8" stroke-width="1.5"/><line x1="4026.4" y1="1138.6" x2="4026.4" y2="1462" stroke="#b8b8b8" stroke-width="1.5"/><line x1="4073.6" y1="1138.6" x2="4073.6" y2="1462" stroke="#b8b8b8" stroke-width="1.5"/><line x1="4120.8" y1="1138.6" x2="4120.8" y2="1462" stroke="#b8b8b8" stroke-width="1.5"/><line x1="4168.0" y1="1138.6" x2="4168.0" y2="1462" stroke="#b8b8b8" stroke-width="1.5"/><line x1="4215.3" y1="1138.6" x2="4215.3" y2="1462" stroke="#b8b8b8" stroke-width="1.5"/><line x1="4262.5" y1="1138.6" x2="4262.5" y2="1462" stroke="#b8b8b8" stroke-width="1.5"/><line x1="4309.7" y1="1138.6" x2="4309.7" y2="1462" stroke="#b8b8b8" stroke-width="1.5"/><line x1="3365.3" y1="1138.6" x2="3365.3" y2="1462" stroke="#888" stroke-width="2"/><line x1="3365.3" y1="1462" x2="4335" y2="1462" stroke="#999" stroke-width="2"/><line x1="3365.3" y1="1314.6" x2="4335" y2="1314.6" stroke="#c050d0" stroke-width="3" stroke-dasharray="12,9"/><line x1="3365.3" y1="1337" x2="4335" y2="1337" stroke="#f07050" stroke-width="3" stroke-dasharray="12,9"/><line x1="3365.3" y1="1347" x2="4335" y2="1347" stroke="#e0d040" stroke-width="3" stroke-dasharray="12,9"/><line x1="3365.3" y1="1361" x2="4335" y2="1361" stroke="#f4f4f4" stroke-width="3" stroke-dasharray="12,9"/><line x1="4094" y1="1138.6" x2="4094" y2="1462" stroke="#444" stroke-width="3" stroke-dasharray="10,7"/><rect x="4144" y="1338.7" width="191" height="44.799999999999955" rx="8" fill="#f2f2f2" opacity=".92"/><rect x="4168" y="1350" width="167" height="19.5" rx="6" fill="#e6e23a"/><rect x="4168" y="1324.7" width="167" height="36.299999999999955" rx="6" fill="#ff5000"/><text x="4251" y="1350.85" text-anchor="middle" font-size="23" font-weight="bold" fill="#3a0a0a" opacity=".85" font-family="Liberation Sans">避難判断水位</text><rect x="4168" y="1291" width="167" height="36.5" rx="6" fill="#b01eb8"/><text x="4251" y="1317.25" text-anchor="middle" font-size="23" font-weight="bold" fill="#222" font-family="Liberation Sans">氾濫危険水位</text><polyline points="3365.3,1389.1 3424.2,1390.3 3463.4,1389.1 3508.3,1380.7 3547.5,1372.3 3581.1,1363.9 3614.8,1338.7 3654.0,1316.3 3693.2,1299.5 3738.1,1285.5 3782.9,1268.6 3827.7,1249.0 3872.6,1235.0 3895.0,1232.2 3928.6,1233.3 3984.7,1235.0 4007.1,1231.1 4040.7,1232.2 4091.2,1235.0 4119.2,1243.4 4164.0,1254.6 4208.9,1271.4 4253.7,1285.5 4287.3,1293.9 4335.0,1293.9" fill="none" stroke="#0a78d2" stroke-width="6.5" stroke-linejoin="round" stroke-linecap="round"/><text x="3371.3" y="1480" transform="rotate(-45 3371.3 1480)" text-anchor="end" font-size="30" fill="#666" font-family="Liberation Sans">00:00</text><text x="3418.5" y="1480" transform="rotate(-45 3418.5 1480)" text-anchor="end" font-size="30" fill="#666" font-family="Liberation Sans">01:10</text><text x="3465.7" y="1480" transform="rotate(-45 3465.7 1480)" text-anchor="end" font-size="30" fill="#666" font-family="Liberation Sans">02:20</text><text x="3513.0" y="1480" transform="rotate(-45 3513.0 1480)" text-anchor="end" font-size="30" fill="#666" font-family="Liberation Sans">03:30</text><text x="3560.2" y="1480" transform="rotate(-45 3560.2 1480)" text-anchor="end" font-size="30" fill="#666" font-family="Liberation Sans">04:40</text><text x="3607.4" y="1480" transform="rotate(-45 3607.4 1480)" text-anchor="end" font-size="30" fill="#666" font-family="Liberation Sans">05:50</text><text x="3654.6" y="1480" transform="rotate(-45 3654.6 1480)" text-anchor="end" font-size="30" fill="#666" font-family="Liberation Sans">07:00</text><text x="3701.8" y="1480" transform="rotate(-45 3701.8 1480)" text-anchor="end" font-size="30" fill="#666" font-family="Liberation Sans">08:10</text><text x="3749.1" y="1480" transform="rotate(-45 3749.1 1480)" text-anchor="end" font-size="30" fill="#666" font-family="Liberation Sans">09:20</text><text x="3796.3" y="1480" transform="rotate(-45 3796.3 1480)" text-anchor="end" font-size="30" fill="#666" font-family="Liberation Sans">10:30</text><text x="3843.5" y="1480" transform="rotate(-45 3843.5 1480)" text-anchor="end" font-size="30" fill="#666" font-family="Liberation Sans">11:40</text><text x="3890.7" y="1480" transform="rotate(-45 3890.7 1480)" text-anchor="end" font-size="30" fill="#666" font-family="Liberation Sans">12:50</text><text x="3937.9" y="1480" transform="rotate(-45 3937.9 1480)" text-anchor="end" font-size="30" fill="#666" font-family="Liberation Sans">14:00</text><text x="3985.2" y="1480" transform="rotate(-45 3985.2 1480)" text-anchor="end" font-size="30" fill="#666" font-family="Liberation Sans">15:10</text><text x="4032.4" y="1480" transform="rotate(-45 4032.4 1480)" text-anchor="end" font-size="30" fill="#666" font-family="Liberation Sans">16:20</text><text x="4079.6" y="1480" transform="rotate(-45 4079.6 1480)" text-anchor="end" font-size="30" fill="#666" font-family="Liberation Sans">17:30</text><text x="4126.8" y="1480" transform="rotate(-45 4126.8 1480)" text-anchor="end" font-size="30" fill="#666" font-family="Liberation Sans">18:40</text><text x="4174.0" y="1480" transform="rotate(-45 4174.0 1480)" text-anchor="end" font-size="30" fill="#666" font-family="Liberation Sans">19:50</text><text x="4221.3" y="1480" transform="rotate(-45 4221.3 1480)" text-anchor="end" font-size="30" fill="#666" font-family="Liberation Sans">21:00</text><text x="4268.5" y="1480" transform="rotate(-45 4268.5 1480)" text-anchor="end" font-size="30" fill="#666" font-family="Liberation Sans">22:10</text><text x="4315.7" y="1480" transform="rotate(-45 4315.7 1480)" text-anchor="end" font-size="30" fill="#666" font-family="Liberation Sans">23:20</text></svg>
<div class="a" style="left:3290px;top:1121px;width:62px;text-align:right;font-size:32px;line-height:36px;color:#555;z-index:1">6</div>
<div class="a" style="left:3290px;top:1167px;width:62px;text-align:right;font-size:32px;line-height:36px;color:#555;z-index:1">5</div>
<div class="a" style="left:3290px;top:1213px;width:62px;text-align:right;font-size:32px;line-height:36px;color:#555;z-index:1">4</div>
<div class="a" style="left:3290px;top:1259px;width:62px;text-align:right;font-size:32px;line-height:36px;color:#555;z-index:1">3</div>
<div class="a" style="left:3290px;top:1305px;width:62px;text-align:right;font-size:32px;line-height:36px;color:#555;z-index:1">2</div>
<div class="a" style="left:3290px;top:1352px;width:62px;text-align:right;font-size:32px;line-height:36px;color:#555;z-index:1">1</div>
<div class="a" style="left:3290px;top:1398px;width:62px;text-align:right;font-size:32px;line-height:36px;color:#555;z-index:1">0</div>
<div class="a" style="left:3290px;top:1444px;width:62px;text-align:right;font-size:32px;line-height:36px;color:#555;z-index:1">-1</div>
<div class="a" style="left:3281px;top:1300px;width:0;height:0;z-index:1"><div style="position:absolute;left:-150px;top:-20px;width:300px;text-align:center;font-size:30px;line-height:40px;color:#666;transform:rotate(-90deg);white-space:nowrap">水位(m)</div></div>
<div class="a" style="left:3599px;top:1568px;width:103px;height:34px;background:#e2e2e2;border:2px solid #cfcfcf;box-sizing:border-box;z-index:1"></div>
<div class="a" style="left:3715px;top:1566px;font-size:31px;line-height:36px;color:#666;font-weight:normal;white-space:nowrap;z-index:1;">横断面</div>
<div class="a" style="left:3831px;top:1567px;width:108px;height:37px;background:#0a78d2;z-index:1"></div>
<div class="a" style="left:3951px;top:1566px;font-size:31px;line-height:36px;color:#666;font-weight:normal;white-space:nowrap;z-index:1;">水位</div>
<svg class="a" style="left:0;top:0;z-index:1" width="4400" height="2133" viewBox="0 0 4400 2133"><rect x="3365.4" y="1821.7" width="971.2000000000003" height="321.29999999999995" fill="#e5e5e5"/><polygon points="3365.4,2107.3 3365.4,1918.6 3376.1,1918.6 3377.0,1854.3 3379.3,1900.9 3407.3,1900.9 3412.0,1912.5 3428.3,1918.6 3602.9,1914.8 3605.3,1952.1 3614.6,1956.8 3647.2,1994.0 3682.1,2031.3 3710.1,2061.6 3712.4,2077.9 3759.0,2091.9 3791.6,2098.8 3833.5,2133.8 3987.3,2133.8 4029.2,2101.2 4061.8,2077.9 4066.4,2059.2 4094.4,2017.3 4131.7,1975.4 4159.6,1961.4 4182.9,1919.5 4220.2,1918.6 4222.5,1879.9 4224.8,1919.5 4304.0,1921.8 4306.3,1882.2 4308.7,1924.2 4329.6,1928.8 4329.6,2107.3" fill="#cfcfcf" stroke="#aaa" stroke-width="1.5"/><line x1="3365.4" y1="1821.7" x2="4336.6" y2="1821.7" stroke="#c0c0c0" stroke-width="1.5"/><line x1="3365.4" y1="1857.4" x2="4336.6" y2="1857.4" stroke="#c0c0c0" stroke-width="1.5"/><line x1="3365.4" y1="1893.1" x2="4336.6" y2="1893.1" stroke="#c0c0c0" stroke-width="1.5"/><line x1="3365.4" y1="1928.8" x2="4336.6" y2="1928.8" stroke="#c0c0c0" stroke-width="1.5"/><line x1="3365.4" y1="1964.5" x2="4336.6" y2="1964.5" stroke="#c0c0c0" stroke-width="1.5"/><line x1="3365.4" y1="2000.2" x2="4336.6" y2="2000.2" stroke="#c0c0c0" stroke-width="1.5"/><line x1="3365.4" y1="2035.9" x2="4336.6" y2="2035.9" stroke="#c0c0c0" stroke-width="1.5"/><line x1="3365.4" y1="2071.6" x2="4336.6" y2="2071.6" stroke="#c0c0c0" stroke-width="1.5"/><line x1="3365.4" y1="2107.3" x2="4336.6" y2="2107.3" stroke="#999" stroke-width="1.5"/><line x1="3365.4" y1="2143.0" x2="4336.6" y2="2143.0" stroke="#c0c0c0" stroke-width="1.5"/><line x1="3365.4" y1="1821.7" x2="3365.4" y2="2143" stroke="#b8b8b8" stroke-width="1.5"/><line x1="3412.6" y1="1821.7" x2="3412.6" y2="2143" stroke="#b8b8b8" stroke-width="1.5"/><line x1="3459.8" y1="1821.7" x2="3459.8" y2="2143" stroke="#b8b8b8" stroke-width="1.5"/><line x1="3507.1" y1="1821.7" x2="3507.1" y2="2143" stroke="#b8b8b8" stroke-width="1.5"/><line x1="3554.3" y1="1821.7" x2="3554.3" y2="2143" stroke="#b8b8b8" stroke-width="1.5"/><line x1="3601.5" y1="1821.7" x2="3601.5" y2="2143" stroke="#b8b8b8" stroke-width="1.5"/><line x1="3648.7" y1="1821.7" x2="3648.7" y2="2143" stroke="#b8b8b8" stroke-width="1.5"/><line x1="3695.9" y1="1821.7" x2="3695.9" y2="2143" stroke="#b8b8b8" stroke-width="1.5"/><line x1="3743.2" y1="1821.7" x2="3743.2" y2="2143" stroke="#b8b8b8" stroke-width="1.5"/><line x1="3790.4" y1="1821.7" x2="3790.4" y2="2143" stroke="#b8b8b8" stroke-width="1.5"/><line x1="3837.6" y1="1821.7" x2="3837.6" y2="2143" stroke="#b8b8b8" stroke-width="1.5"/><line x1="3884.8" y1="1821.7" x2="3884.8" y2="2143" stroke="#b8b8b8" stroke-width="1.5"/><line x1="3932.0" y1="1821.7" x2="3932.0" y2="2143" stroke="#b8b8b8" stroke-width="1.5"/><line x1="3979.3" y1="1821.7" x2="3979.3" y2="2143" stroke="#b8b8b8" stroke-width="1.5"/><line x1="4026.5" y1="1821.7" x2="4026.5" y2="2143" stroke="#b8b8b8" stroke-width="1.5"/><line x1="4073.7" y1="1821.7" x2="4073.7" y2="2143" stroke="#b8b8b8" stroke-width="1.5"/><line x1="4120.9" y1="1821.7" x2="4120.9" y2="2143" stroke="#b8b8b8" stroke-width="1.5"/><line x1="4168.1" y1="1821.7" x2="4168.1" y2="2143" stroke="#b8b8b8" stroke-width="1.5"/><line x1="4215.4" y1="1821.7" x2="4215.4" y2="2143" stroke="#b8b8b8" stroke-width="1.5"/><line x1="4262.6" y1="1821.7" x2="4262.6" y2="2143" stroke="#b8b8b8" stroke-width="1.5"/><line x1="4309.8" y1="1821.7" x2="4309.8" y2="2143" stroke="#b8b8b8" stroke-width="1.5"/><line x1="3365.4" y1="1821.7" x2="3365.4" y2="2143" stroke="#888" stroke-width="2"/><line x1="3365.4" y1="2143" x2="4336.6" y2="2143" stroke="#999" stroke-width="2"/><line x1="3365.4" y1="1948" x2="4336.6" y2="1948" stroke="#c040d0" stroke-width="3" stroke-dasharray="12,9"/><line x1="3365.4" y1="1994" x2="4336.6" y2="1994" stroke="#f07050" stroke-width="3" stroke-dasharray="12,9"/><line x1="3365.4" y1="2004.7" x2="4336.6" y2="2004.7" stroke="#e0d040" stroke-width="3" stroke-dasharray="12,9"/><line x1="3365.4" y1="2019.7" x2="4336.6" y2="2019.7" stroke="#f4f4f4" stroke-width="3" stroke-dasharray="12,9"/><line x1="4093.5" y1="1821.7" x2="4093.5" y2="2143" stroke="#444" stroke-width="3" stroke-dasharray="10,7"/><rect x="4145.6" y="1996" width="191.0" height="47" rx="8" fill="#f2f2f2" opacity=".92"/><rect x="4168" y="2003" width="168.60000000000036" height="27" rx="6" fill="#e6e23a"/><rect x="4168" y="1971.7" width="168.60000000000036" height="46.299999999999955" rx="6" fill="#ff5000"/><text x="4251" y="2002.85" text-anchor="middle" font-size="23" font-weight="bold" fill="#3a0a0a" opacity=".85" font-family="Liberation Sans">避難判断水位</text><rect x="4168" y="1924" width="168.60000000000036" height="47.700000000000045" rx="6" fill="#b01eb8"/><text x="4251" y="1955.85" text-anchor="middle" font-size="23" font-weight="bold" fill="#222" font-family="Liberation Sans">氾濫危険水位</text><polyline points="3365.4,2066.2 3479.5,2067.6 3535.4,2063.9 3572.7,2049.9 3642.5,2026.6 3712.4,1984.7 3759.0,1970.7 3805.6,1963.8 3898.7,1947.4 3991.9,1938.1 4085.1,1934.4 4094.4,1926.5 4131.7,1928.8 4168.9,1933.5 4224.8,1952.1 4271.4,1966.1 4336.6,1982.4" fill="none" stroke="#0a78d2" stroke-width="6.5" stroke-linejoin="round" stroke-linecap="round"/></svg>
<div class="a" style="left:3290px;top:1804px;width:62px;text-align:right;font-size:32px;line-height:36px;color:#555;z-index:1">8</div>
<div class="a" style="left:3290px;top:1839px;width:62px;text-align:right;font-size:32px;line-height:36px;color:#555;z-index:1">7</div>
<div class="a" style="left:3290px;top:1875px;width:62px;text-align:right;font-size:32px;line-height:36px;color:#555;z-index:1">6</div>
<div class="a" style="left:3290px;top:1911px;width:62px;text-align:right;font-size:32px;line-height:36px;color:#555;z-index:1">5</div>
<div class="a" style="left:3290px;top:1946px;width:62px;text-align:right;font-size:32px;line-height:36px;color:#555;z-index:1">4</div>
<div class="a" style="left:3290px;top:1982px;width:62px;text-align:right;font-size:32px;line-height:36px;color:#555;z-index:1">3</div>
<div class="a" style="left:3290px;top:2018px;width:62px;text-align:right;font-size:32px;line-height:36px;color:#555;z-index:1">2</div>
<div class="a" style="left:3290px;top:2054px;width:62px;text-align:right;font-size:32px;line-height:36px;color:#555;z-index:1">1</div>
<div class="a" style="left:3290px;top:2089px;width:62px;text-align:right;font-size:32px;line-height:36px;color:#555;z-index:1">0</div>
<div class="a" style="left:3290px;top:2125px;width:62px;text-align:right;font-size:32px;line-height:36px;color:#555;z-index:1">-1</div>
<div class="a" style="left:3281px;top:1982px;width:0;height:0;z-index:1"><div style="position:absolute;left:-150px;top:-20px;width:300px;text-align:center;font-size:30px;line-height:40px;color:#666;transform:rotate(-90deg);white-space:nowrap">水位(m)</div></div>
</body></html>
